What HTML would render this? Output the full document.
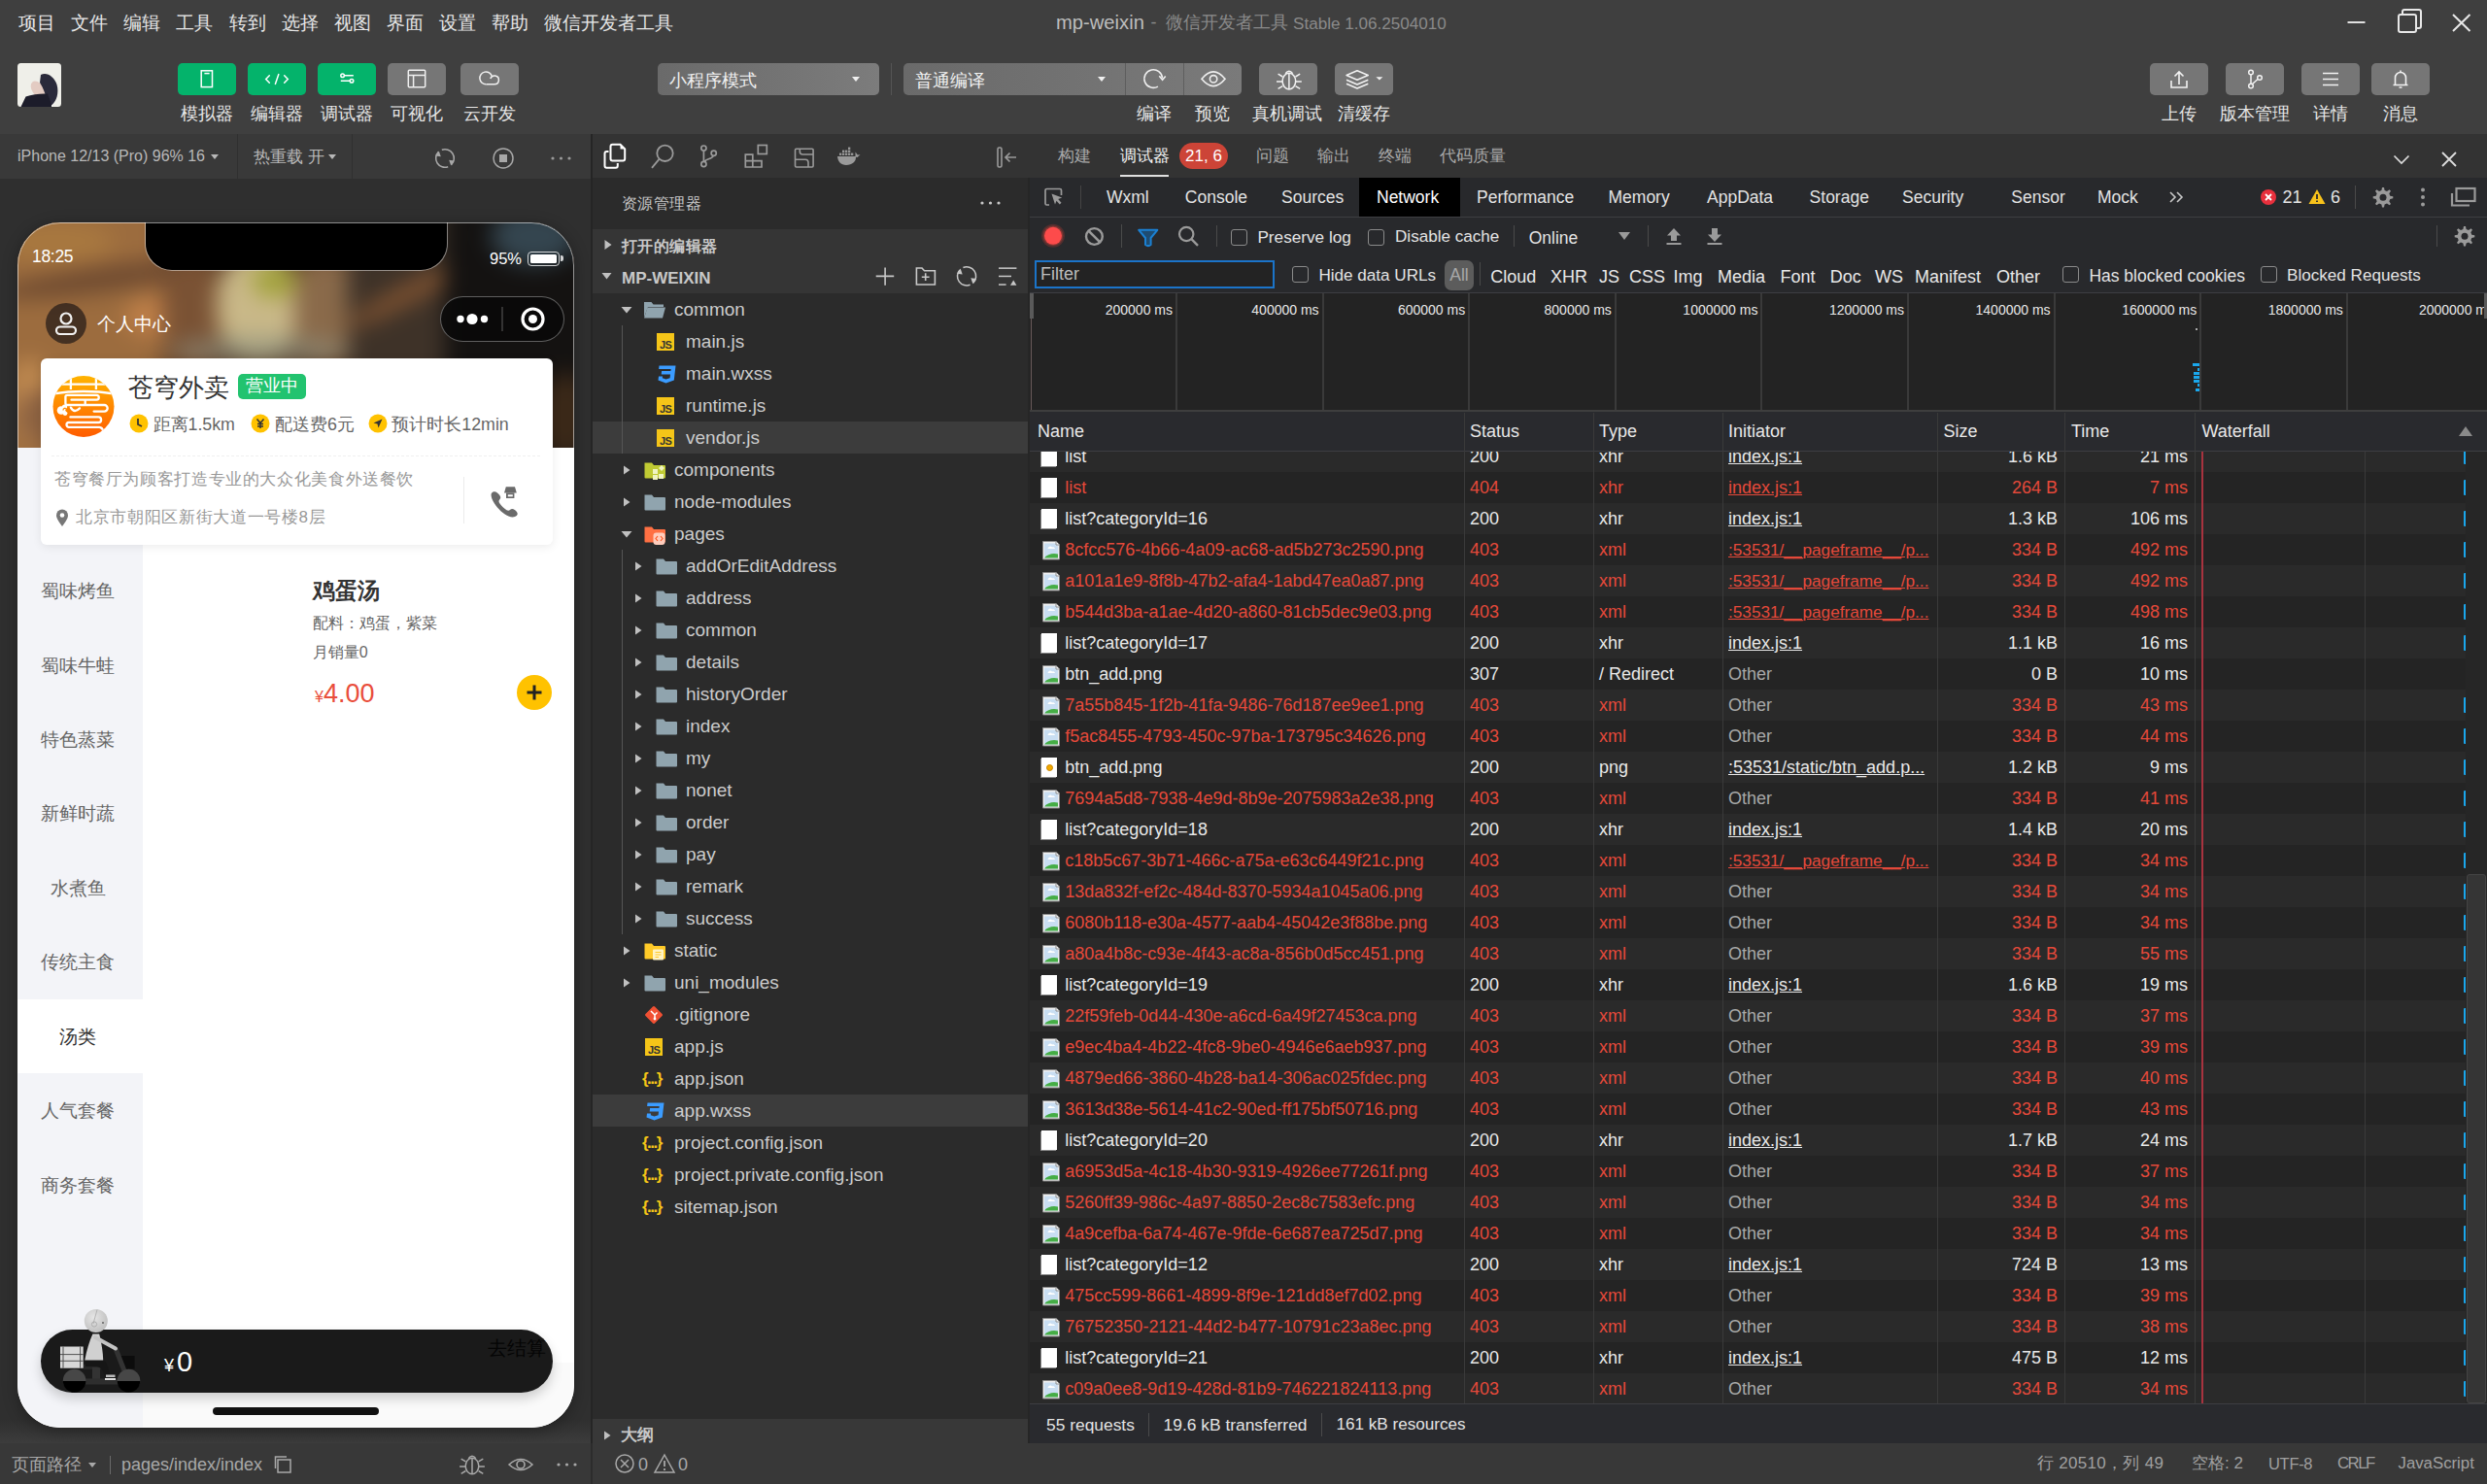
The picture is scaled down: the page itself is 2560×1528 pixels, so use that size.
<!DOCTYPE html>
<html><head><meta charset="utf-8"><title>mp-weixin</title>
<style>
html,body{margin:0;padding:0;}
body{width:2560px;height:1528px;overflow:hidden;position:relative;background:#2f2f2f;font-family:"Liberation Sans",sans-serif;}
div,svg{box-sizing:border-box;}
</style></head><body>
<div style="position:absolute;left:0px;top:0px;width:2560px;height:138px;background:#3f3f3f;"></div>
<div style="position:absolute;left:19px;top:9.5px;line-height:27px;font-size:19.3px;color:#e6e6e6;white-space:nowrap;">项目</div>
<div style="position:absolute;left:73px;top:9.5px;line-height:27px;font-size:19.3px;color:#e6e6e6;white-space:nowrap;">文件</div>
<div style="position:absolute;left:127px;top:9.5px;line-height:27px;font-size:19.3px;color:#e6e6e6;white-space:nowrap;">编辑</div>
<div style="position:absolute;left:181px;top:9.5px;line-height:27px;font-size:19.3px;color:#e6e6e6;white-space:nowrap;">工具</div>
<div style="position:absolute;left:235.5px;top:9.5px;line-height:27px;font-size:19.3px;color:#e6e6e6;white-space:nowrap;">转到</div>
<div style="position:absolute;left:289.5px;top:9.5px;line-height:27px;font-size:19.3px;color:#e6e6e6;white-space:nowrap;">选择</div>
<div style="position:absolute;left:343.5px;top:9.5px;line-height:27px;font-size:19.3px;color:#e6e6e6;white-space:nowrap;">视图</div>
<div style="position:absolute;left:397.6px;top:9.5px;line-height:27px;font-size:19.3px;color:#e6e6e6;white-space:nowrap;">界面</div>
<div style="position:absolute;left:451.6px;top:9.5px;line-height:27px;font-size:19.3px;color:#e6e6e6;white-space:nowrap;">设置</div>
<div style="position:absolute;left:505.7px;top:9.5px;line-height:27px;font-size:19.3px;color:#e6e6e6;white-space:nowrap;">帮助</div>
<div style="position:absolute;left:559.7px;top:9.5px;line-height:27px;font-size:19.3px;color:#e6e6e6;white-space:nowrap;">微信开发者工具</div>
<div style="position:absolute;left:1087px;top:9.0px;line-height:28px;font-size:20.2px;color:#bdbdbd;white-space:nowrap;">mp-weixin</div>
<div style="position:absolute;left:1184.5px;top:10.5px;line-height:25px;font-size:18px;color:#8a8a8a;white-space:nowrap;">-</div>
<div style="position:absolute;left:1199.7px;top:10.5px;line-height:25px;font-size:18px;color:#8a8a8a;white-space:nowrap;">微信开发者工具</div>
<div style="position:absolute;left:1331px;top:12.5px;line-height:24px;font-size:17.1px;color:#8a8a8a;white-space:nowrap;">Stable 1.06.2504010</div>
<svg style="position:absolute;left:2410px;top:5px;" width="150" height="36" viewBox="0 0 150 36" fill="none">
<line x1="6.5" y1="18" x2="24.5" y2="18" stroke="#e0e0e0" stroke-width="2"/>
<rect x="59" y="10" width="18" height="18" stroke="#e8e8e8" stroke-width="2" rx="2"/>
<path d="M63 9 V7 a2 2 0 0 1 2 -2 H80 a2 2 0 0 1 2 2 V22 a2 2 0 0 1 -2 2 H78" stroke="#e8e8e8" stroke-width="2"/>
<path d="M115 10 L132.5 27 M132.5 10 L115 27" stroke="#e8e8e8" stroke-width="2"/>
</svg>
<svg style="position:absolute;left:18px;top:65px" width="45" height="45" viewBox="0 0 45 45">
<defs><clipPath id="avc"><rect x="0" y="0" width="45" height="45" rx="3.5"/></clipPath><filter id="avb"><feGaussianBlur stdDeviation="0.6"/></filter></defs>
<g clip-path="url(#avc)"><rect x="0" y="0" width="45" height="45" fill="#efefe9"/>
<g filter="url(#avb)">
<ellipse cx="21" cy="27" rx="6" ry="9.5" transform="rotate(-35 21 27)" fill="#e3cbc2"/>
<path d="M24 12 C30 8.5 38 14 40.5 22 C43 31 40 39 35.5 43 L31 41 C29 33 27 26 23 20 Z" fill="#2b2a3a"/>
<path d="M3 46 L8.5 34.5 C15 32 25 31 31 31.5 L35 42 L35 46 Z" fill="#1e1d2b"/>
</g></g></svg>
<div style="position:absolute;left:183px;top:65px;width:60px;height:33px;border-radius:5px;background:#04b36b"></div>
<svg style="position:absolute;left:183px;top:65px;" width="60" height="33" viewBox="0 0 60 33" fill="none"><rect x="24.2" y="7.8" width="11.3" height="16.8" stroke="#fff" stroke-width="1.5"/><line x1="27.4" y1="10.6" x2="32.6" y2="10.6" stroke="#fff" stroke-width="1.5"/></svg>
<div style="position:absolute;left:255px;top:65px;width:60px;height:33px;border-radius:5px;background:#04b36b"></div>
<svg style="position:absolute;left:255px;top:65px;" width="60" height="33" viewBox="0 0 60 33" fill="none"><path d="M22.3 12.8 L18.7 16.5 L22.3 20.2 M37.7 12.8 L41.3 16.5 L37.7 20.2 M31.8 11.6 L28.4 21.4" stroke="#fff" stroke-width="1.5" stroke-linecap="round"/></svg>
<div style="position:absolute;left:327px;top:65px;width:60px;height:33px;border-radius:5px;background:#04b36b"></div>
<svg style="position:absolute;left:327px;top:65px;" width="60" height="33" viewBox="0 0 60 33" fill="none"><circle cx="25.6" cy="12.7" r="1.8" stroke="#fff" stroke-width="1.5"/><circle cx="35" cy="18.2" r="1.8" stroke="#fff" stroke-width="1.5"/><path d="M27.4 12.7 H36.8 M23.8 18.2 H33.2" stroke="#fff" stroke-width="1.5"/></svg>
<div style="position:absolute;left:399px;top:65px;width:60px;height:33px;border-radius:5px;background:#767676"></div>
<svg style="position:absolute;left:399px;top:65px;" width="60" height="33" viewBox="0 0 60 33" fill="none"><rect x="21.3" y="7.3" width="17.4" height="17.4" rx="1" stroke="#f0f0f0" stroke-width="1.5"/><path d="M21.3 12.4 H38.7 M26.6 12.4 V24.7" stroke="#f0f0f0" stroke-width="1.5"/></svg>
<div style="position:absolute;left:474px;top:65px;width:60px;height:33px;border-radius:5px;background:#767676"></div>
<svg style="position:absolute;left:474px;top:65px;" width="60" height="33" viewBox="0 0 60 33" fill="none"><path d="M26.5 21.8 A6.4 6.4 0 1 1 32.4 13.6" stroke="#f0f0f0" stroke-width="1.5"/><path d="M26.5 21.8 H35 A4.4 4.4 0 1 0 30.8 16" stroke="#f0f0f0" stroke-width="1.5"/></svg>
<div style="position:absolute;left:113.0px;width:200px;text-align:center;top:104.0px;line-height:26px;font-size:18.3px;color:#e6e6e6;white-space:nowrap;">模拟器</div>
<div style="position:absolute;left:185.0px;width:200px;text-align:center;top:104.0px;line-height:26px;font-size:18.3px;color:#e6e6e6;white-space:nowrap;">编辑器</div>
<div style="position:absolute;left:257.0px;width:200px;text-align:center;top:104.0px;line-height:26px;font-size:18.3px;color:#e6e6e6;white-space:nowrap;">调试器</div>
<div style="position:absolute;left:329.0px;width:200px;text-align:center;top:104.0px;line-height:26px;font-size:18.3px;color:#e6e6e6;white-space:nowrap;">可视化</div>
<div style="position:absolute;left:404.0px;width:200px;text-align:center;top:104.0px;line-height:26px;font-size:18.3px;color:#e6e6e6;white-space:nowrap;">云开发</div>
<div style="position:absolute;left:677px;top:65px;width:228px;height:33px;border-radius:5px;background:linear-gradient(90deg,#6a6a6a,#7c7c7c)"></div>
<div style="position:absolute;left:689px;top:70.5px;line-height:25px;font-size:18px;color:#f0f0f0;white-space:nowrap;">小程序模式</div>
<svg style="position:absolute;left:875px;top:76px;" width="12" height="10" viewBox="0 0 12 10" fill="none"><path d="M2 3 L10 3 L6 8 Z" fill="#f0f0f0"/></svg>
<div style="position:absolute;left:917px;top:65px;width:1px;height:33px;background:#555;"></div>
<div style="position:absolute;left:930px;top:65px;width:348px;height:33px;border-radius:5px;background:linear-gradient(90deg,#6a6a6a,#7a7a7a)"></div>
<div style="position:absolute;left:1158px;top:65px;width:1px;height:33px;background:#5e5e5e;"></div>
<div style="position:absolute;left:1218px;top:65px;width:1px;height:33px;background:#5e5e5e;"></div>
<div style="position:absolute;left:942px;top:70.5px;line-height:25px;font-size:18px;color:#f0f0f0;white-space:nowrap;">普通编译</div>
<svg style="position:absolute;left:1128px;top:76px;" width="12" height="10" viewBox="0 0 12 10" fill="none"><path d="M2 3 L10 3 L6 8 Z" fill="#f0f0f0"/></svg>
<svg style="position:absolute;left:1158px;top:65px;" width="60" height="33" viewBox="0 0 60 33" fill="none"><path d="M33.9 24.1 A9.3 9.3 0 1 1 38.5 15.5" stroke="#eee" stroke-width="1.6" fill="none"/><path d="M35.3 13.3 L38.6 17.2 L41.7 13.4" stroke="#eee" stroke-width="1.6" fill="none"/></svg>
<svg style="position:absolute;left:1218px;top:65px;" width="60" height="33" viewBox="0 0 60 33" fill="none"><path d="M19 16.3 Q31 1.5 43 16.3 Q31 31 19 16.3 Z" stroke="#eee" stroke-width="1.6"/><circle cx="31.1" cy="16.3" r="3.7" stroke="#eee" stroke-width="1.6"/></svg>
<div style="position:absolute;left:1088.0px;width:200px;text-align:center;top:104.0px;line-height:26px;font-size:18.3px;color:#e6e6e6;white-space:nowrap;">编译</div>
<div style="position:absolute;left:1148.0px;width:200px;text-align:center;top:104.0px;line-height:26px;font-size:18.3px;color:#e6e6e6;white-space:nowrap;">预览</div>
<div style="position:absolute;left:1296px;top:65px;width:60px;height:33px;border-radius:5px;background:#767676"></div>
<svg style="position:absolute;left:1296px;top:65px;" width="60" height="33" viewBox="0 0 60 33" fill="none"><g stroke="#f2f2f2" stroke-width="1.5" fill="none"><ellipse cx="30.9" cy="18.6" rx="6.8" ry="8.3"/><path d="M27.2 10.8 Q30.9 5.8 34.6 10.8"/><path d="M30.9 10.3 V26.9"/><path d="M24.3 14 L19.6 11.2 M24 19 H18 M24.3 23.6 L19.6 26.4 M37.5 14 L42.2 11.2 M37.8 19 H43.8 M37.5 23.6 L42.2 26.4"/></g></svg>
<div style="position:absolute;left:1374px;top:65px;width:60px;height:33px;border-radius:5px;background:#767676"></div>
<svg style="position:absolute;left:1374px;top:65px;" width="60" height="33" viewBox="0 0 60 33" fill="none"><g stroke="#f2f2f2" stroke-width="1.5" fill="none" stroke-linejoin="round"><path d="M12 12.5 L23 7.8 L34.3 12.5 L23 17.3 Z"/><path d="M12 17.3 L23 22 L34.3 17.3 M12 21.3 L23 26 L34.3 21.3"/></g><path d="M42.4 14.2 H49.4 L45.9 17.4 Z" fill="#f2f2f2"/></svg>
<div style="position:absolute;left:1225.0px;width:200px;text-align:center;top:104.0px;line-height:26px;font-size:18.3px;color:#e6e6e6;white-space:nowrap;">真机调试</div>
<div style="position:absolute;left:1304.0px;width:200px;text-align:center;top:104.0px;line-height:26px;font-size:18.3px;color:#e6e6e6;white-space:nowrap;">清缓存</div>
<div style="position:absolute;left:2213px;top:65px;width:60px;height:33px;border-radius:5px;background:#767676"></div>
<svg style="position:absolute;left:2213px;top:65px;" width="60" height="33" viewBox="0 0 60 33" fill="none"><path d="M22 18 V25 H38 V18" stroke="#f2f2f2" stroke-width="1.6"/><path d="M30 22 V9 M25.5 13.5 L30 9 L34.5 13.5" stroke="#f2f2f2" stroke-width="1.6"/></svg>
<div style="position:absolute;left:2291px;top:65px;width:60px;height:33px;border-radius:5px;background:#767676"></div>
<svg style="position:absolute;left:2291px;top:65px;" width="60" height="33" viewBox="0 0 60 33" fill="none"><circle cx="26" cy="9.5" r="2.3" stroke="#f2f2f2" stroke-width="1.5"/><circle cx="26" cy="23.5" r="2.3" stroke="#f2f2f2" stroke-width="1.5"/><circle cx="35" cy="15" r="2.3" stroke="#f2f2f2" stroke-width="1.5"/><path d="M26 12 V21 M33 16.5 L27.5 21.5" stroke="#f2f2f2" stroke-width="1.5"/></svg>
<div style="position:absolute;left:2369px;top:65px;width:60px;height:33px;border-radius:5px;background:#767676"></div>
<svg style="position:absolute;left:2369px;top:65px;" width="60" height="33" viewBox="0 0 60 33" fill="none"><path d="M22 10.5 H38 M22 16.5 H38 M22 22.5 H38" stroke="#f2f2f2" stroke-width="1.6"/></svg>
<div style="position:absolute;left:2441px;top:65px;width:60px;height:33px;border-radius:5px;background:#767676"></div>
<svg style="position:absolute;left:2441px;top:65px;" width="60" height="33" viewBox="0 0 60 33" fill="none"><path d="M24.5 22 V15 a5.5 5.5 0 0 1 11 0 V22 M22.5 22.5 H37.5 M30 7.5 V9.5 M28.5 25 H31.5" stroke="#f2f2f2" stroke-width="1.6"/></svg>
<div style="position:absolute;left:2143.0px;width:200px;text-align:center;top:104.0px;line-height:26px;font-size:18.3px;color:#e6e6e6;white-space:nowrap;">上传</div>
<div style="position:absolute;left:2221.0px;width:200px;text-align:center;top:104.0px;line-height:26px;font-size:18.3px;color:#e6e6e6;white-space:nowrap;">版本管理</div>
<div style="position:absolute;left:2299.0px;width:200px;text-align:center;top:104.0px;line-height:26px;font-size:18.3px;color:#e6e6e6;white-space:nowrap;">详情</div>
<div style="position:absolute;left:2371.0px;width:200px;text-align:center;top:104.0px;line-height:26px;font-size:18.3px;color:#e6e6e6;white-space:nowrap;">消息</div>
<div style="position:absolute;left:0px;top:138px;width:608px;height:46px;background:#393939;"></div>
<div style="position:absolute;left:18px;top:150.0px;line-height:22px;font-size:16px;color:#b8b8b8;white-space:nowrap;">iPhone 12/13 (Pro) 96% 16</div>
<svg style="position:absolute;left:214px;top:155px;" width="14" height="12" viewBox="0 0 14 12" fill="none"><path d="M3 4 L11 4 L7 9 Z" fill="#b8b8b8"/></svg>
<div style="position:absolute;left:244px;top:138px;width:1px;height:46px;background:#303030;"></div>
<div style="position:absolute;left:261px;top:149.5px;line-height:23px;font-size:16.5px;color:#b8b8b8;white-space:nowrap;">热重载 开</div>
<svg style="position:absolute;left:335px;top:155px;" width="14" height="12" viewBox="0 0 14 12" fill="none"><path d="M3 4 L11 4 L7 9 Z" fill="#b8b8b8"/></svg>
<div style="position:absolute;left:362px;top:138px;width:1px;height:46px;background:#303030;"></div>
<svg style="position:absolute;left:440px;top:145px;" width="40" height="36" viewBox="0 0 40 36" fill="none"><g transform="translate(-440,-145)" stroke="#a8a8a8" stroke-width="1.5" fill="none"><path d="M454.8 154.3 A9.3 9.3 0 0 1 464.6 169.6"/><path d="M461.2 171.7 A9.3 9.3 0 0 1 451.4 156.4"/></g><g transform="translate(-440,-145)" fill="#a8a8a8"><path d="M462.2 164.8 L467.8 165.6 L464.2 170.6 Z"/><path d="M453.8 161.2 L448.2 160.4 L451.8 155.4 Z"/></g></svg>
<svg style="position:absolute;left:500px;top:145px;" width="36" height="36" viewBox="0 0 36 36" fill="none"><circle cx="18" cy="17.9" r="10" stroke="#a8a8a8" stroke-width="1.5"/><rect x="14" y="14" width="8" height="8" fill="#a8a8a8"/></svg>
<svg style="position:absolute;left:566px;top:157px;" width="24" height="12" viewBox="0 0 24 12" fill="none"><circle cx="3" cy="6" r="1.6" fill="#9a9a9a"/><circle cx="11.5" cy="6" r="1.6" fill="#9a9a9a"/><circle cx="20" cy="6" r="1.6" fill="#9a9a9a"/></svg>
<div style="position:absolute;left:608px;top:138px;width:2px;height:1348px;background:#252525;"></div>
<div style="position:absolute;left:0px;top:184px;width:608px;height:1302px;background:linear-gradient(180deg,#2f2f2f 0,#2f2f2f 1278px,#3c3c3c 1302px);"></div>
<div style="position:absolute;left:18px;top:229px;width:573px;height:1241px;border-radius:44px;box-shadow:0 3px 16px rgba(0,0,0,0.32)"></div>
<div id="phone" style="position:absolute;left:18px;top:229px;width:573px;height:1241px;border-radius:44px;overflow:hidden;background:#fff">
<div style="position:absolute;left:0;top:0;width:573px;height:232px;overflow:hidden;background:#5a3d26">
<div style="position:absolute;left:-40px;top:-40px;width:660px;height:320px;filter:blur(11px)">
 <div style="position:absolute;left:0.0px;top:0.0px;width:190px;height:312px;background:#9c6c3e;border-radius:0;transform:rotate(0deg);opacity:1"></div>
 <div style="position:absolute;left:15.0px;top:85.0px;width:230px;height:26px;background:#6e4a30;border-radius:50%;transform:rotate(-8deg);opacity:1"></div>
 <div style="position:absolute;left:20.0px;top:40.0px;width:120px;height:40px;background:#a8783f;border-radius:50%;transform:rotate(0deg);opacity:1"></div>
 <div style="position:absolute;left:150.0px;top:116.0px;width:70px;height:42px;background:#c08048;border-radius:50%;transform:rotate(0deg);opacity:1"></div>
 <div style="position:absolute;left:30.0px;top:180.0px;width:44px;height:90px;background:#c08a50;border-radius:50%;transform:rotate(0deg);opacity:1"></div>
 <div style="position:absolute;left:190.0px;top:75.0px;width:60px;height:120px;background:#7a5234;border-radius:40%;transform:rotate(0deg);opacity:1"></div>
 <div style="position:absolute;left:245.0px;top:70.0px;width:86px;height:110px;background:#c9b888;border-radius:45%;transform:rotate(0deg);opacity:1"></div>
 <div style="position:absolute;left:281.0px;top:82.0px;width:48px;height:36px;background:#a3a33e;border-radius:50%;transform:rotate(0deg);opacity:1"></div>
 <div style="position:absolute;left:325.0px;top:75.0px;width:66px;height:110px;background:#8a6a4a;border-radius:40%;transform:rotate(0deg);opacity:1"></div>
 <div style="position:absolute;left:380.0px;top:0.0px;width:100px;height:312px;background:#3e3228;border-radius:0;transform:rotate(0deg);opacity:1"></div>
 <div style="position:absolute;left:370.0px;top:101.0px;width:150px;height:22px;background:#7a5030;border-radius:50%;transform:rotate(-28deg);opacity:1"></div>
 <div style="position:absolute;left:480.0px;top:0.0px;width:180px;height:312px;background:#141211;border-radius:0;transform:rotate(0deg);opacity:1"></div>
 <div style="position:absolute;left:527.0px;top:24.0px;width:90px;height:60px;background:#34454f;border-radius:50%;transform:rotate(0deg);opacity:1"></div>
 <div style="position:absolute;left:195.0px;top:157.0px;width:190px;height:30px;background:#8a9080;border-radius:50%;transform:rotate(0deg);opacity:0.6"></div>
 <div style="position:absolute;left:575.0px;top:195.0px;width:60px;height:90px;background:#3a2818;border-radius:50%;transform:rotate(0deg);opacity:1"></div>
 <div style="position:absolute;left:40.0px;top:205.0px;width:160px;height:70px;background:#8a6040;border-radius:40%;transform:rotate(0deg);opacity:1"></div>
 <div style="position:absolute;left:240.0px;top:205.0px;width:200px;height:70px;background:#6a4a30;border-radius:40%;transform:rotate(0deg);opacity:1"></div>
</div></div>
<div style="position:absolute;left:132px;top:-2px;width:310px;height:51px;background:#000;border-radius:0 0 27px 27px;box-shadow:0 0 0 1px rgba(255,255,255,0.45)"></div>
<div style="position:absolute;left:15px;top:22.5px;line-height:24px;font-size:17.5px;color:#fff;white-space:nowrap;letter-spacing:-0.3px">18:25</div>
<div style="position:absolute;left:486px;top:26.0px;line-height:23px;font-size:16.5px;color:#fff;white-space:nowrap;">95%</div>
<div style="position:absolute;left:525px;top:29.5px;width:33px;height:15px;border:1.5px solid rgba(255,255,255,0.8);border-radius:4px"></div>
<div style="position:absolute;left:528px;top:32.5px;width:27px;height:9px;background:#fff;border-radius:1.5px"></div>
<div style="position:absolute;left:559px;top:34px;width:3px;height:6px;background:rgba(255,255,255,0.8);border-radius:0 2px 2px 0"></div>
<div style="position:absolute;left:29px;top:83px;width:42px;height:42px;border-radius:50%;background:rgba(40,30,25,0.75)"></div>
<svg style="position:absolute;left:29px;top:83px;" width="42" height="42" viewBox="0 0 42 42" fill="none"><circle cx="21" cy="16" r="5.5" stroke="#f2f2f2" stroke-width="2.2"/><rect x="11" y="24.5" width="20" height="7.5" rx="3.75" stroke="#f2f2f2" stroke-width="2.2"/></svg>
<div style="position:absolute;left:82px;top:90.5px;line-height:27px;font-size:19px;color:#fff;white-space:nowrap;">个人中心</div>
<div style="position:absolute;left:435px;top:75.5px;width:128px;height:47px;border-radius:24px;border:1.5px solid rgba(255,255,255,0.35);background:rgba(8,8,8,0.85)"></div>
<svg style="position:absolute;left:435px;top:75.5px;" width="128" height="47" viewBox="0 0 128 47" fill="none"><circle cx="21" cy="23.5" r="3.7" fill="#fff"/><circle cx="33" cy="23.5" r="5.6" fill="#fff"/><circle cx="45.5" cy="23.5" r="3.7" fill="#fff"/><line x1="64" y1="11" x2="64" y2="36" stroke="rgba(255,255,255,0.35)" stroke-width="1"/><circle cx="95.5" cy="23.5" r="10.5" stroke="#fff" stroke-width="3.2"/><circle cx="95.5" cy="23.5" r="4.5" fill="#fff"/></svg>
<div style="position:absolute;left:0;top:232px;width:129px;height:1009px;background:#f3f4f8"></div>
<div style="position:absolute;left:0;top:800px;width:129px;height:76px;background:#fff"></div>
<div style="position:absolute;left:2.0px;width:120px;text-align:center;top:365.5px;line-height:27px;font-size:19px;color:#666;white-space:nowrap;">蜀味烤鱼</div>
<div style="position:absolute;left:2.0px;width:120px;text-align:center;top:443.1px;line-height:27px;font-size:19px;color:#666;white-space:nowrap;">蜀味牛蛙</div>
<div style="position:absolute;left:2.0px;width:120px;text-align:center;top:519.3px;line-height:27px;font-size:19px;color:#666;white-space:nowrap;">特色蒸菜</div>
<div style="position:absolute;left:2.0px;width:120px;text-align:center;top:594.5px;line-height:27px;font-size:19px;color:#666;white-space:nowrap;">新鲜时蔬</div>
<div style="position:absolute;left:2.0px;width:120px;text-align:center;top:671.5px;line-height:27px;font-size:19px;color:#666;white-space:nowrap;">水煮鱼</div>
<div style="position:absolute;left:2.0px;width:120px;text-align:center;top:747.5px;line-height:27px;font-size:19px;color:#666;white-space:nowrap;">传统主食</div>
<div style="position:absolute;left:2.0px;width:120px;text-align:center;top:824.5px;line-height:27px;font-size:19px;color:#333;white-space:nowrap;">汤类</div>
<div style="position:absolute;left:2.0px;width:120px;text-align:center;top:901.2px;line-height:27px;font-size:19px;color:#666;white-space:nowrap;">人气套餐</div>
<div style="position:absolute;left:2.0px;width:120px;text-align:center;top:978.3px;line-height:27px;font-size:19px;color:#666;white-space:nowrap;">商务套餐</div>
<div style="position:absolute;left:23.5px;top:140px;width:527px;height:192px;background:#fff;border-radius:6px;box-shadow:0 2px 10px rgba(0,0,0,0.08)"></div>
<svg style="position:absolute;left:35.65px;top:157.9px" width="64" height="64" viewBox="0 0 64 64">
<defs><linearGradient id="lg1" x1="0" y1="0" x2="0" y2="1"><stop offset="0" stop-color="#ffb300"/><stop offset="1" stop-color="#ff5c00"/></linearGradient>
<clipPath id="lc"><circle cx="32" cy="31.5" r="31.5"/></clipPath></defs>
<circle cx="32" cy="31.5" r="31.5" fill="url(#lg1)"/>
<g clip-path="url(#lc)" stroke="#fff" stroke-width="2.3" fill="none" stroke-linecap="round">
<path d="M18.9 -2 V14 M44.9 -2 V14" stroke-linecap="butt"/>
<path d="M-2 8.7 H66" stroke-linecap="butt"/>
<path d="M-2 18.8 Q32 13.2 66 18.8" stroke-linecap="butt"/>
<path d="M19.5 24.7 H45.3 a2.45 2.45 0 0 0 0 -4.9 H15.2 a1.8 1.8 0 0 0 -1.8 1.8 V28.2 a1.8 1.8 0 0 0 1.8 1.8 H53.4 a3.3 3.3 0 0 1 0 6.6 H42.6"/>
<path d="M33.7 25.5 V29.5"/>
<path d="M18.9 32.6 Q22.5 39 28 33.4"/>
<path d="M18.4 42.4 H47.3 a2.8 2.8 0 0 1 0 5.6 H16.9 a2.4 2.4 0 0 0 0 4.8 H48.3 Q51.2 53 52.6 57" />
</g>
<circle cx="9" cy="35.5" r="4.3" fill="#fff"/><circle cx="12.5" cy="32" r="2.6" fill="#fff"/><circle cx="13" cy="38.5" r="2.4" fill="#fff"/>
<path d="M11 35.5 a2 2 0 1 1 3 1.5" stroke="#ff8a00" stroke-width="1.2" fill="none"/>
</svg>
<div style="position:absolute;left:114px;top:152.0px;line-height:36px;font-size:26px;color:#333;white-space:nowrap;">苍穹外卖</div>
<div style="position:absolute;left:227px;top:155.6px;width:69.5px;height:26.2px;background:#22c36f;border-radius:5px"></div>
<div style="position:absolute;left:221.7px;width:80px;text-align:center;top:156.2px;line-height:25px;font-size:17.7px;color:#fff;white-space:nowrap;">营业中</div>
<svg style="position:absolute;left:114.80000000000001px;top:197.39999999999998px;" width="20" height="20" viewBox="0 0 20 20" fill="none"><circle cx="10" cy="10" r="9.5" fill="#ffc200"/><path d="M9 5 V11 L13 13" stroke="#333" stroke-width="1.8" fill="none"/></svg>
<svg style="position:absolute;left:239.89999999999998px;top:197.39999999999998px;" width="20" height="20" viewBox="0 0 20 20" fill="none"><circle cx="10" cy="10" r="9.5" fill="#ffc200"/><path d="M6.5 5.5 L10 9.5 L13.5 5.5 M10 9.5 V15 M7 10.5 H13 M7 13 H13" stroke="#333" stroke-width="1.5" fill="none"/></svg>
<svg style="position:absolute;left:361px;top:197.39999999999998px;" width="20" height="20" viewBox="0 0 20 20" fill="none"><circle cx="10" cy="10" r="9.5" fill="#ffc200"/><path d="M14.5 5.5 L5.5 9.5 L9.5 10.5 L10.5 14.5 Z" fill="#333"/></svg>
<div style="position:absolute;left:139.5px;top:195.7px;line-height:25px;font-size:17.8px;color:#666;white-space:nowrap;">距离1.5km</div>
<div style="position:absolute;left:265px;top:195.7px;line-height:25px;font-size:17.8px;color:#666;white-space:nowrap;">配送费6元</div>
<div style="position:absolute;left:385.3px;top:195.7px;line-height:25px;font-size:17.8px;color:#666;white-space:nowrap;">预计时长12min</div>
<div style="position:absolute;left:35px;top:239.5px;width:503px;height:0;border-top:1px dashed #efefef"></div>
<div style="position:absolute;left:38px;top:253.0px;line-height:24px;font-size:17px;color:#999;white-space:nowrap;letter-spacing:0.62px">苍穹餐厅为顾客打造专业的大众化美食外送餐饮</div>
<svg style="position:absolute;left:39px;top:295px;" width="14" height="19" viewBox="0 0 14 19" fill="none"><path d="M7 18 C3 12.5 1 9.5 1 6.5 a6 6 0 0 1 12 0 C13 9.5 11 12.5 7 18 Z" fill="#777"/><circle cx="7" cy="6.5" r="2.3" fill="#fff"/></svg>
<div style="position:absolute;left:60px;top:292.0px;line-height:24px;font-size:17px;color:#999;white-space:nowrap;letter-spacing:0.66px">北京市朝阳区新街大道一号楼8层</div>
<div style="position:absolute;left:459px;top:262px;width:1px;height:48px;background:#ebebeb"></div>
<svg style="position:absolute;left:482px;top:266px;" width="40" height="45" viewBox="0 0 40 45" fill="none"><g transform="translate(-500,-495)" fill="#6a6a6a"><path d="M507.5 506.5 C510 505.5 512 507 514 509.5 C515.5 511.5 515.8 512.8 514.2 514.6 C513.2 515.8 513.3 516.8 514.5 518.6 C516.5 521.5 518.8 523.7 521.5 525.2 C523 526 524.2 525.8 525.2 524.8 C526.5 523.5 528 523.6 530.2 525.2 C532.8 527.2 533.5 529.5 531.8 531 C530 532.6 527 533 523.5 531.5 C518 529 512.5 524 509 518.5 C506.3 514.2 505 510.5 505.8 508.2 C506.1 507.4 506.7 506.8 507.5 506.5 Z"/><path d="M520.8 501.2 H530 L531.8 507.4 H519 Z"/><rect x="521" y="507.4" width="8.4" height="5.6"/><rect x="522.8" y="509.3" width="5" height="2" fill="#fff"/></g></svg>
<div style="position:absolute;left:303.7px;top:362.5px;line-height:32px;font-size:23px;color:#333;white-space:nowrap;font-weight:bold">鸡蛋汤</div>
<div style="position:absolute;left:303.7px;top:401.5px;line-height:22px;font-size:16px;color:#666;white-space:nowrap;">配料：鸡蛋，紫菜</div>
<div style="position:absolute;left:303.7px;top:432.0px;line-height:22px;font-size:16px;color:#666;white-space:nowrap;">月销量0</div>
<div style="position:absolute;left:306px;top:465.6px;line-height:38px;font-size:27px;color:#e94e3c;white-space:nowrap;"><span style="font-size:16px">¥</span>4.00</div>
<div style="position:absolute;left:514.3px;top:466.29999999999995px;width:36px;height:36px;border-radius:50%;background:#ffc200"></div>
<svg style="position:absolute;left:514.3px;top:466.29999999999995px;" width="36" height="36" viewBox="0 0 36 36" fill="none"><path d="M18 10.5 V25.5 M10.5 18 H25.5" stroke="#222" stroke-width="3"/></svg>
<div style="position:absolute;left:129px;top:1174px;width:444px;height:67px;background:#fafafa"></div>
<div style="position:absolute;left:23.8px;top:1139.6px;width:527.2px;height:65px;border-radius:33px;background:#1a1a1a;box-shadow:0 6px 12px rgba(0,0,0,0.18)"></div>
<div style="position:absolute;left:483.6px;top:1145.0px;line-height:28px;font-size:20px;color:#050505;white-space:nowrap;">去结算</div>
<div style="position:absolute;left:151px;top:1152.8px;line-height:41px;font-size:29px;color:#fff;white-space:nowrap;"><span style="font-size:18px;margin-right:3px">¥</span>0</div>
<svg style="position:absolute;left:42px;top:1115px" width="104" height="104" viewBox="60 1344 104 104">
<defs><radialGradient id="hg" cx="0.4" cy="0.35" r="0.7"><stop offset="0" stop-color="#e6e6e6"/><stop offset="1" stop-color="#bdbdbd"/></radialGradient></defs>
<rect x="62" y="1386.5" width="23.7" height="22.2" fill="#d8d8d8"/>
<path d="M65 1386.5 V1408.7 M82.6 1386.5 V1408.7 M62 1394.6 H85.7 M62 1401.3 H85.7" stroke="#444" stroke-width="0.9"/>
<rect x="124.4" y="1396" width="14.2" height="13.4" fill="#0c0c0c"/>
<path d="M86 1405 H108 V1410 H86 Z" fill="#262626"/>
<rect x="95" y="1408" width="8" height="14" fill="#333"/>
<path d="M119 1388.5 L127.8 1411" stroke="#333" stroke-width="5"/>
<path d="M86 1419.5 H122 L124 1425.5 H84 Z" fill="#2e2e2e"/>
<path d="M87.5 1400.5 L106 1400.5 C110 1402 112 1408 113 1417 L108 1417.5 C106 1411 104 1408 100 1407 L88 1407 Z" fill="#161616"/>
<rect x="109" y="1415.5" width="9.5" height="2.5" fill="#bbb"/><rect x="108" y="1419" width="11" height="2" fill="#ddd"/>
<path d="M95.4 1373.5 L102.2 1373.5 C104.5 1383 106 1392 106.2 1400.6 L87.3 1400.6 C89 1391 92 1381 95.4 1373.5 Z" fill="#d0d0d0"/>
<path d="M98 1377 L119 1388.5" stroke="#c4c4c4" stroke-width="4" stroke-linecap="round"/>
<circle cx="98.8" cy="1360" r="12" fill="url(#hg)"/>
<path d="M100 1348.5 L96 1363" stroke="#aaa" stroke-width="0.8"/>
<circle cx="97" cy="1363.5" r="2.6" fill="none" stroke="#aaa" stroke-width="0.9"/>
<circle cx="106" cy="1362" r="0.9" fill="#555"/>
<circle cx="76.6" cy="1421.5" r="11.8" fill="#474747"/><path d="M64.8 1422 a11.8 11.8 0 0 0 23.6 0 Z" fill="#000"/>
<circle cx="132.5" cy="1421.5" r="11.8" fill="#474747"/><path d="M120.7 1422 a11.8 11.8 0 0 0 23.6 0 Z" fill="#000"/>
</svg>
<div style="position:absolute;left:201px;top:1220px;width:170.5px;height:8px;border-radius:4px;background:#111"></div>
<div style="position:absolute;left:0;top:0;width:573px;height:1241px;border-radius:44px;border:1px solid rgba(255,255,255,0.55)"></div>
</div>
<div style="position:absolute;left:610px;top:138px;width:450px;height:45px;background:#333333;"></div>
<div style="position:absolute;left:610px;top:183px;width:450px;height:1303px;background:#2b2b2b;"></div>
<svg style="position:absolute;left:600px;top:140px;" width="300" height="40" viewBox="0 0 300 40" fill="none"><g transform="translate(-600,-140)"><path d="M626.5 156 H624.5 a2 2 0 0 0 -2 2 V170.8 a2 2 0 0 0 2 2 H633.8 a2 2 0 0 0 2 -2 V168" stroke="#fff" stroke-width="2" fill="none"/><path d="M630.5 148.7 H638.5 L643.2 153.4 V163.5 a2 2 0 0 1 -2 2 H630.5 a2 2 0 0 1 -2 -2 V150.7 a2 2 0 0 1 2 -2 Z" stroke="#fff" stroke-width="2" fill="none"/><path d="M638.5 148.7 L643.2 153.4 H638.5 Z" fill="#fff"/><circle cx="684.5" cy="157.8" r="8.2" stroke="#9a9a9a" stroke-width="1.8" fill="none"/><path d="M678.5 163.8 L671 172.8" stroke="#9a9a9a" stroke-width="1.8"/><circle cx="724.4" cy="152.6" r="2.6" stroke="#9a9a9a" stroke-width="1.7" fill="none"/><circle cx="724.4" cy="169" r="2.6" stroke="#9a9a9a" stroke-width="1.7" fill="none"/><circle cx="734.7" cy="157.8" r="2.6" stroke="#9a9a9a" stroke-width="1.7" fill="none"/><path d="M724.4 155.2 V166.4 M734.2 160.4 C733 164 726 163.5 725.5 166.5" stroke="#9a9a9a" stroke-width="1.7" fill="none"/><path d="M767.3 159.2 H774.8 V172 H767.3 Z M767.3 165.6 H784 V172 H774.8" stroke="#9a9a9a" stroke-width="1.7" fill="none"/><rect x="780.3" y="149.5" width="9" height="9" stroke="#9a9a9a" stroke-width="1.7" fill="none"/><rect x="818.5" y="153.2" width="18.6" height="18.8" rx="1.2" stroke="#9a9a9a" stroke-width="1.6" fill="none"/><path d="M823.3 153.2 V156 a3 3 0 0 0 3 3 H837.1 M818.5 164.3 H829 a3 3 0 0 1 3 3 V172" stroke="#9a9a9a" stroke-width="1.6" fill="none"/><path d="M862 161 H881 C881.5 166.5 877 170 871 170 C865.5 170 862.3 166 862 161 Z" fill="#9a9a9a"/><path d="M880.5 161.5 L880.5 156.5 L882.8 159.5 L885.5 159.2 L882.5 162 Z" fill="#9a9a9a"/><rect x="864" y="157.6" width="2.3" height="2.3" fill="#9a9a9a"/><rect x="867" y="157.6" width="2.3" height="2.3" fill="#9a9a9a"/><rect x="870" y="157.6" width="2.3" height="2.3" fill="#9a9a9a"/><rect x="873" y="157.6" width="2.3" height="2.3" fill="#9a9a9a"/><rect x="876" y="157.6" width="2.3" height="2.3" fill="#9a9a9a"/><rect x="867" y="154.6" width="2.3" height="2.3" fill="#9a9a9a"/><rect x="870" y="154.6" width="2.3" height="2.3" fill="#9a9a9a"/><rect x="873" y="154.6" width="2.3" height="2.3" fill="#9a9a9a"/><rect x="873" y="151.6" width="2.3" height="2.3" fill="#9a9a9a"/></g></svg>
<svg style="position:absolute;left:1024px;top:150px;" width="26" height="24" viewBox="0 0 26 24" fill="none"><rect x="3" y="2" width="4" height="20" rx="1.5" stroke="#9a9a9a" stroke-width="1.6"/><path d="M22 12 H11 M15.5 7.5 L11 12 L15.5 16.5" stroke="#9a9a9a" stroke-width="1.7"/></svg>
<div style="position:absolute;left:640px;top:199.0px;line-height:22px;font-size:16px;color:#c8c8c8;white-space:nowrap;letter-spacing:0.4px">资源管理器</div>
<svg style="position:absolute;left:1008px;top:203px;" width="24" height="12" viewBox="0 0 24 12" fill="none"><circle cx="3" cy="6" r="1.6" fill="#c8c8c8"/><circle cx="11.5" cy="6" r="1.6" fill="#c8c8c8"/><circle cx="20" cy="6" r="1.6" fill="#c8c8c8"/></svg>
<div style="position:absolute;left:610px;top:236px;width:448px;height:66px;background:#353535;"></div>
<svg style="position:absolute;left:619px;top:244px;" width="14" height="16" viewBox="0 0 14 16" fill="none"><path d="M3.5 3 L10.5 8 L3.5 13 Z" fill="#c0c0c0"/></svg>
<div style="position:absolute;left:640px;top:242.5px;line-height:22px;font-size:16px;color:#c8c8c8;white-space:nowrap;font-weight:bold;letter-spacing:0.4px">打开的编辑器</div>
<svg style="position:absolute;left:617px;top:277px;" width="16" height="14" viewBox="0 0 16 14" fill="none"><path d="M2.5 4 L12.5 4 L7.5 10.5 Z" fill="#c0c0c0"/></svg>
<div style="position:absolute;left:640px;top:274.8px;line-height:24px;font-size:17px;color:#c8c8c8;white-space:nowrap;font-weight:bold">MP-WEIXIN</div>
<svg style="position:absolute;left:890px;top:265px;" width="170" height="36" viewBox="0 0 170 36" fill="none"><g transform="translate(-890,-265)" stroke="#c8c8c8" fill="none"><path d="M911.1 275.4 V293.8 M901.7 284.4 H920.2" stroke-width="1.6"/><path d="M943.4 293 V276 H949 L951.5 278.8 H962.4 V293 Z" stroke-width="1.6"/><path d="M952.7 281.3 V289.1 M948.8 285.2 H956.6" stroke-width="1.6"/><path d="M991.4 275.5 A9.6 9.6 0 0 1 1001.8 291.2" stroke-width="1.5"/><path d="M998.6 293.3 A9.6 9.6 0 0 1 987.9 278" stroke-width="1.5"/></g><g transform="translate(-890,-265)" fill="#c8c8c8"><path d="M999.3 286.3 L1005.1 287.1 L1001.4 292.2 Z"/><path d="M990.7 282.5 L984.9 281.7 L988.6 276.6 Z"/><rect x="1028" y="275.4" width="18.4" height="1.5"/><rect x="1028" y="283.7" width="13" height="1.5"/><rect x="1028" y="292.3" width="7.6" height="1.5"/><path d="M1040 293.8 L1043.2 288.6 L1046.4 293.8 Z"/></g></svg>
<div style="position:absolute;left:610px;top:434px;width:448px;height:33px;background:#3c3c3c;"></div>
<div style="position:absolute;left:610px;top:1127px;width:448px;height:33px;background:#3c3c3c;"></div>
<div style="position:absolute;left:640px;top:335px;width:1px;height:132px;background:#555;"></div>
<div style="position:absolute;left:640px;top:566px;width:1px;height:396px;background:#555;"></div>
<svg style="position:absolute;left:638px;top:312.5px;" width="14" height="12" viewBox="0 0 14 12" fill="none"><path d="M1.5 3 L12.5 3 L7 9.5 Z" fill="#c0c0c0"/></svg>
<svg style="position:absolute;left:662px;top:307.5px;" width="24" height="22" viewBox="0 0 24 22" fill="none"><path d="M1 3 H8.5 L10.5 5.5 H21 V8 H5 L1 19 Z" fill="#90a4ae"/><path d="M4.5 8.5 H23 L20 19.5 H1 Z" fill="#90a4ae"/></svg>
<div style="position:absolute;left:694px;top:305.0px;line-height:27px;font-size:19px;color:#cccccc;white-space:nowrap;">common</div>
<div style="position:absolute;left:676px;top:342.5px;width:18px;height:18px;background:#f5c518"></div>
<div style="position:absolute;left:679px;top:348.5px;line-height:12px;font-size:11px;font-weight:bold;color:#333;letter-spacing:-0.5px">JS</div>
<div style="position:absolute;left:706px;top:338.0px;line-height:27px;font-size:19px;color:#cccccc;white-space:nowrap;">main.js</div>
<svg style="position:absolute;left:675px;top:373.5px;" width="22" height="22" viewBox="0 0 22 22" fill="none"><path d="M3.5 2.5 H20.5 L18.8 17.5 L10.5 20.5 L2.5 17.5 L3 13.5 H7 L6.8 15.2 L10.5 16.5 L14.6 15.2 L15 11.5 H5.7 L6.1 8 H15.4 L15.7 6 H3.1 Z" fill="#3b9cff"/></svg>
<div style="position:absolute;left:706px;top:371.0px;line-height:27px;font-size:19px;color:#cccccc;white-space:nowrap;">main.wxss</div>
<div style="position:absolute;left:676px;top:408.5px;width:18px;height:18px;background:#f5c518"></div>
<div style="position:absolute;left:679px;top:414.5px;line-height:12px;font-size:11px;font-weight:bold;color:#333;letter-spacing:-0.5px">JS</div>
<div style="position:absolute;left:706px;top:404.0px;line-height:27px;font-size:19px;color:#cccccc;white-space:nowrap;">runtime.js</div>
<div style="position:absolute;left:676px;top:441.5px;width:18px;height:18px;background:#f5c518"></div>
<div style="position:absolute;left:679px;top:447.5px;line-height:12px;font-size:11px;font-weight:bold;color:#333;letter-spacing:-0.5px">JS</div>
<div style="position:absolute;left:706px;top:437.0px;line-height:27px;font-size:19px;color:#cccccc;white-space:nowrap;">vendor.js</div>
<svg style="position:absolute;left:639px;top:476.5px;" width="12" height="14" viewBox="0 0 12 14" fill="none"><path d="M3 2.5 L9.5 7 L3 11.5 Z" fill="#c0c0c0"/></svg>
<svg style="position:absolute;left:662px;top:472.5px;" width="24" height="22" viewBox="0 0 24 22" fill="none"><path d="M1.5 3.5 H9 L11 6 H22 a1 1 0 0 1 1 1 V18.5 a1 1 0 0 1 -1 1 H2.5 a1 1 0 0 1 -1 -1 Z" fill="#c0ca33"/><rect x="10" y="10" width="5" height="5" fill="#f0f4c3"/><rect x="16" y="15" width="5" height="5" fill="#f0f4c3"/><rect x="10" y="16" width="5" height="5" fill="#f0f4c3"/><path d="M16 9 L19 12 L22 9 L19 6 Z" fill="#f0f4c3"/></svg>
<div style="position:absolute;left:694px;top:470.0px;line-height:27px;font-size:19px;color:#cccccc;white-space:nowrap;">components</div>
<svg style="position:absolute;left:639px;top:509.5px;" width="12" height="14" viewBox="0 0 12 14" fill="none"><path d="M3 2.5 L9.5 7 L3 11.5 Z" fill="#c0c0c0"/></svg>
<svg style="position:absolute;left:662px;top:505.5px;" width="24" height="22" viewBox="0 0 24 22" fill="none"><path d="M1.5 3.5 H9 L11 6 H22 a1 1 0 0 1 1 1 V18.5 a1 1 0 0 1 -1 1 H2.5 a1 1 0 0 1 -1 -1 Z" fill="#90a4ae"/></svg>
<div style="position:absolute;left:694px;top:503.0px;line-height:27px;font-size:19px;color:#cccccc;white-space:nowrap;">node-modules</div>
<svg style="position:absolute;left:638px;top:543.5px;" width="14" height="12" viewBox="0 0 14 12" fill="none"><path d="M1.5 3 L12.5 3 L7 9.5 Z" fill="#c0c0c0"/></svg>
<svg style="position:absolute;left:662px;top:538.5px;" width="24" height="22" viewBox="0 0 24 22" fill="none"><path d="M1.5 3.5 H9 L11 6 H22 a1 1 0 0 1 1 1 V18.5 a1 1 0 0 1 -1 1 H2.5 a1 1 0 0 1 -1 -1 Z" fill="#ff7043"/><rect x="10.5" y="9.5" width="12" height="12.5" rx="3" fill="#ffccbc"/><path d="M15 13 L13 15.5 L15 18 M18 13 L20 15.5 L18 18" stroke="#ff5722" stroke-width="1.2" fill="none"/></svg>
<div style="position:absolute;left:694px;top:536.0px;line-height:27px;font-size:19px;color:#cccccc;white-space:nowrap;">pages</div>
<svg style="position:absolute;left:651px;top:575.5px;" width="12" height="14" viewBox="0 0 12 14" fill="none"><path d="M3 2.5 L9.5 7 L3 11.5 Z" fill="#c0c0c0"/></svg>
<svg style="position:absolute;left:674px;top:571.5px;" width="24" height="22" viewBox="0 0 24 22" fill="none"><path d="M1.5 3.5 H9 L11 6 H22 a1 1 0 0 1 1 1 V18.5 a1 1 0 0 1 -1 1 H2.5 a1 1 0 0 1 -1 -1 Z" fill="#90a4ae"/></svg>
<div style="position:absolute;left:706px;top:569.0px;line-height:27px;font-size:19px;color:#cccccc;white-space:nowrap;">addOrEditAddress</div>
<svg style="position:absolute;left:651px;top:608.5px;" width="12" height="14" viewBox="0 0 12 14" fill="none"><path d="M3 2.5 L9.5 7 L3 11.5 Z" fill="#c0c0c0"/></svg>
<svg style="position:absolute;left:674px;top:604.5px;" width="24" height="22" viewBox="0 0 24 22" fill="none"><path d="M1.5 3.5 H9 L11 6 H22 a1 1 0 0 1 1 1 V18.5 a1 1 0 0 1 -1 1 H2.5 a1 1 0 0 1 -1 -1 Z" fill="#90a4ae"/></svg>
<div style="position:absolute;left:706px;top:602.0px;line-height:27px;font-size:19px;color:#cccccc;white-space:nowrap;">address</div>
<svg style="position:absolute;left:651px;top:641.5px;" width="12" height="14" viewBox="0 0 12 14" fill="none"><path d="M3 2.5 L9.5 7 L3 11.5 Z" fill="#c0c0c0"/></svg>
<svg style="position:absolute;left:674px;top:637.5px;" width="24" height="22" viewBox="0 0 24 22" fill="none"><path d="M1.5 3.5 H9 L11 6 H22 a1 1 0 0 1 1 1 V18.5 a1 1 0 0 1 -1 1 H2.5 a1 1 0 0 1 -1 -1 Z" fill="#90a4ae"/></svg>
<div style="position:absolute;left:706px;top:635.0px;line-height:27px;font-size:19px;color:#cccccc;white-space:nowrap;">common</div>
<svg style="position:absolute;left:651px;top:674.5px;" width="12" height="14" viewBox="0 0 12 14" fill="none"><path d="M3 2.5 L9.5 7 L3 11.5 Z" fill="#c0c0c0"/></svg>
<svg style="position:absolute;left:674px;top:670.5px;" width="24" height="22" viewBox="0 0 24 22" fill="none"><path d="M1.5 3.5 H9 L11 6 H22 a1 1 0 0 1 1 1 V18.5 a1 1 0 0 1 -1 1 H2.5 a1 1 0 0 1 -1 -1 Z" fill="#90a4ae"/></svg>
<div style="position:absolute;left:706px;top:668.0px;line-height:27px;font-size:19px;color:#cccccc;white-space:nowrap;">details</div>
<svg style="position:absolute;left:651px;top:707.5px;" width="12" height="14" viewBox="0 0 12 14" fill="none"><path d="M3 2.5 L9.5 7 L3 11.5 Z" fill="#c0c0c0"/></svg>
<svg style="position:absolute;left:674px;top:703.5px;" width="24" height="22" viewBox="0 0 24 22" fill="none"><path d="M1.5 3.5 H9 L11 6 H22 a1 1 0 0 1 1 1 V18.5 a1 1 0 0 1 -1 1 H2.5 a1 1 0 0 1 -1 -1 Z" fill="#90a4ae"/></svg>
<div style="position:absolute;left:706px;top:701.0px;line-height:27px;font-size:19px;color:#cccccc;white-space:nowrap;">historyOrder</div>
<svg style="position:absolute;left:651px;top:740.5px;" width="12" height="14" viewBox="0 0 12 14" fill="none"><path d="M3 2.5 L9.5 7 L3 11.5 Z" fill="#c0c0c0"/></svg>
<svg style="position:absolute;left:674px;top:736.5px;" width="24" height="22" viewBox="0 0 24 22" fill="none"><path d="M1.5 3.5 H9 L11 6 H22 a1 1 0 0 1 1 1 V18.5 a1 1 0 0 1 -1 1 H2.5 a1 1 0 0 1 -1 -1 Z" fill="#90a4ae"/></svg>
<div style="position:absolute;left:706px;top:734.0px;line-height:27px;font-size:19px;color:#cccccc;white-space:nowrap;">index</div>
<svg style="position:absolute;left:651px;top:773.5px;" width="12" height="14" viewBox="0 0 12 14" fill="none"><path d="M3 2.5 L9.5 7 L3 11.5 Z" fill="#c0c0c0"/></svg>
<svg style="position:absolute;left:674px;top:769.5px;" width="24" height="22" viewBox="0 0 24 22" fill="none"><path d="M1.5 3.5 H9 L11 6 H22 a1 1 0 0 1 1 1 V18.5 a1 1 0 0 1 -1 1 H2.5 a1 1 0 0 1 -1 -1 Z" fill="#90a4ae"/></svg>
<div style="position:absolute;left:706px;top:767.0px;line-height:27px;font-size:19px;color:#cccccc;white-space:nowrap;">my</div>
<svg style="position:absolute;left:651px;top:806.5px;" width="12" height="14" viewBox="0 0 12 14" fill="none"><path d="M3 2.5 L9.5 7 L3 11.5 Z" fill="#c0c0c0"/></svg>
<svg style="position:absolute;left:674px;top:802.5px;" width="24" height="22" viewBox="0 0 24 22" fill="none"><path d="M1.5 3.5 H9 L11 6 H22 a1 1 0 0 1 1 1 V18.5 a1 1 0 0 1 -1 1 H2.5 a1 1 0 0 1 -1 -1 Z" fill="#90a4ae"/></svg>
<div style="position:absolute;left:706px;top:800.0px;line-height:27px;font-size:19px;color:#cccccc;white-space:nowrap;">nonet</div>
<svg style="position:absolute;left:651px;top:839.5px;" width="12" height="14" viewBox="0 0 12 14" fill="none"><path d="M3 2.5 L9.5 7 L3 11.5 Z" fill="#c0c0c0"/></svg>
<svg style="position:absolute;left:674px;top:835.5px;" width="24" height="22" viewBox="0 0 24 22" fill="none"><path d="M1.5 3.5 H9 L11 6 H22 a1 1 0 0 1 1 1 V18.5 a1 1 0 0 1 -1 1 H2.5 a1 1 0 0 1 -1 -1 Z" fill="#90a4ae"/></svg>
<div style="position:absolute;left:706px;top:833.0px;line-height:27px;font-size:19px;color:#cccccc;white-space:nowrap;">order</div>
<svg style="position:absolute;left:651px;top:872.5px;" width="12" height="14" viewBox="0 0 12 14" fill="none"><path d="M3 2.5 L9.5 7 L3 11.5 Z" fill="#c0c0c0"/></svg>
<svg style="position:absolute;left:674px;top:868.5px;" width="24" height="22" viewBox="0 0 24 22" fill="none"><path d="M1.5 3.5 H9 L11 6 H22 a1 1 0 0 1 1 1 V18.5 a1 1 0 0 1 -1 1 H2.5 a1 1 0 0 1 -1 -1 Z" fill="#90a4ae"/></svg>
<div style="position:absolute;left:706px;top:866.0px;line-height:27px;font-size:19px;color:#cccccc;white-space:nowrap;">pay</div>
<svg style="position:absolute;left:651px;top:905.5px;" width="12" height="14" viewBox="0 0 12 14" fill="none"><path d="M3 2.5 L9.5 7 L3 11.5 Z" fill="#c0c0c0"/></svg>
<svg style="position:absolute;left:674px;top:901.5px;" width="24" height="22" viewBox="0 0 24 22" fill="none"><path d="M1.5 3.5 H9 L11 6 H22 a1 1 0 0 1 1 1 V18.5 a1 1 0 0 1 -1 1 H2.5 a1 1 0 0 1 -1 -1 Z" fill="#90a4ae"/></svg>
<div style="position:absolute;left:706px;top:899.0px;line-height:27px;font-size:19px;color:#cccccc;white-space:nowrap;">remark</div>
<svg style="position:absolute;left:651px;top:938.5px;" width="12" height="14" viewBox="0 0 12 14" fill="none"><path d="M3 2.5 L9.5 7 L3 11.5 Z" fill="#c0c0c0"/></svg>
<svg style="position:absolute;left:674px;top:934.5px;" width="24" height="22" viewBox="0 0 24 22" fill="none"><path d="M1.5 3.5 H9 L11 6 H22 a1 1 0 0 1 1 1 V18.5 a1 1 0 0 1 -1 1 H2.5 a1 1 0 0 1 -1 -1 Z" fill="#90a4ae"/></svg>
<div style="position:absolute;left:706px;top:932.0px;line-height:27px;font-size:19px;color:#cccccc;white-space:nowrap;">success</div>
<svg style="position:absolute;left:639px;top:971.5px;" width="12" height="14" viewBox="0 0 12 14" fill="none"><path d="M3 2.5 L9.5 7 L3 11.5 Z" fill="#c0c0c0"/></svg>
<svg style="position:absolute;left:662px;top:967.5px;" width="24" height="22" viewBox="0 0 24 22" fill="none"><path d="M1.5 3.5 H9 L11 6 H22 a1 1 0 0 1 1 1 V18.5 a1 1 0 0 1 -1 1 H2.5 a1 1 0 0 1 -1 -1 Z" fill="#ffca28"/><rect x="10" y="9.5" width="11" height="11" rx="1" fill="#fff3c4"/><path d="M12.5 12.5 H18.5 M12.5 15 H18.5 M12.5 17.5 H16" stroke="#ffca28" stroke-width="1.2"/></svg>
<div style="position:absolute;left:694px;top:965.0px;line-height:27px;font-size:19px;color:#cccccc;white-space:nowrap;">static</div>
<svg style="position:absolute;left:639px;top:1004.5px;" width="12" height="14" viewBox="0 0 12 14" fill="none"><path d="M3 2.5 L9.5 7 L3 11.5 Z" fill="#c0c0c0"/></svg>
<svg style="position:absolute;left:662px;top:1000.5px;" width="24" height="22" viewBox="0 0 24 22" fill="none"><path d="M1.5 3.5 H9 L11 6 H22 a1 1 0 0 1 1 1 V18.5 a1 1 0 0 1 -1 1 H2.5 a1 1 0 0 1 -1 -1 Z" fill="#90a4ae"/></svg>
<div style="position:absolute;left:694px;top:998.0px;line-height:27px;font-size:19px;color:#cccccc;white-space:nowrap;">uni_modules</div>
<svg style="position:absolute;left:663px;top:1034.5px;" width="20" height="20" viewBox="0 0 20 20" fill="none"><rect x="3.2" y="3.2" width="13.6" height="13.6" transform="rotate(45 10 10)" rx="1.5" fill="#f05033"/><path d="M7 6 L11 10 V14 M11 10 L13.5 7.5" stroke="#fff" stroke-width="1.5"/><circle cx="11" cy="14" r="1.4" fill="#fff"/></svg>
<div style="position:absolute;left:694px;top:1031.0px;line-height:27px;font-size:19px;color:#cccccc;white-space:nowrap;">.gitignore</div>
<div style="position:absolute;left:664px;top:1068.5px;width:18px;height:18px;background:#f5c518"></div>
<div style="position:absolute;left:667px;top:1074.5px;line-height:12px;font-size:11px;font-weight:bold;color:#333;letter-spacing:-0.5px">JS</div>
<div style="position:absolute;left:694px;top:1064.0px;line-height:27px;font-size:19px;color:#cccccc;white-space:nowrap;">app.js</div>
<div style="position:absolute;left:661px;top:1098.5px;line-height:24px;font-size:17px;color:#f5c518;white-space:nowrap;letter-spacing:-1.5px;font-weight:bold">{...}</div>
<div style="position:absolute;left:694px;top:1097.0px;line-height:27px;font-size:19px;color:#cccccc;white-space:nowrap;">app.json</div>
<svg style="position:absolute;left:663px;top:1132.5px;" width="22" height="22" viewBox="0 0 22 22" fill="none"><path d="M3.5 2.5 H20.5 L18.8 17.5 L10.5 20.5 L2.5 17.5 L3 13.5 H7 L6.8 15.2 L10.5 16.5 L14.6 15.2 L15 11.5 H5.7 L6.1 8 H15.4 L15.7 6 H3.1 Z" fill="#3b9cff"/></svg>
<div style="position:absolute;left:694px;top:1130.0px;line-height:27px;font-size:19px;color:#cccccc;white-space:nowrap;">app.wxss</div>
<div style="position:absolute;left:661px;top:1164.5px;line-height:24px;font-size:17px;color:#f5c518;white-space:nowrap;letter-spacing:-1.5px;font-weight:bold">{...}</div>
<div style="position:absolute;left:694px;top:1163.0px;line-height:27px;font-size:19px;color:#cccccc;white-space:nowrap;">project.config.json</div>
<div style="position:absolute;left:661px;top:1197.5px;line-height:24px;font-size:17px;color:#f5c518;white-space:nowrap;letter-spacing:-1.5px;font-weight:bold">{...}</div>
<div style="position:absolute;left:694px;top:1196.0px;line-height:27px;font-size:19px;color:#cccccc;white-space:nowrap;">project.private.config.json</div>
<div style="position:absolute;left:661px;top:1230.5px;line-height:24px;font-size:17px;color:#f5c518;white-space:nowrap;letter-spacing:-1.5px;font-weight:bold">{...}</div>
<div style="position:absolute;left:694px;top:1229.0px;line-height:27px;font-size:19px;color:#cccccc;white-space:nowrap;">sitemap.json</div>
<div style="position:absolute;left:610px;top:1461px;width:448px;height:25px;background:#383838;"></div>
<svg style="position:absolute;left:619px;top:1470.5px;" width="12" height="14" viewBox="0 0 12 14" fill="none"><path d="M3 2.5 L9.5 7 L3 11.5 Z" fill="#c0c0c0"/></svg>
<div style="position:absolute;left:639px;top:1466.0px;line-height:23px;font-size:16.5px;color:#c8c8c8;white-space:nowrap;font-weight:bold">大纲</div>
<div style="position:absolute;left:1058px;top:183px;width:2px;height:1303px;background:#262626;"></div>
<div style="position:absolute;left:1060px;top:138px;width:1500px;height:45px;background:#333333;"></div>
<div style="position:absolute;left:1089.4px;top:149.0px;line-height:24px;font-size:17px;color:#a8a8a8;white-space:nowrap;">构建</div>
<div style="position:absolute;left:1152.8px;top:149.0px;line-height:24px;font-size:17px;color:#f0f0f0;white-space:nowrap;">调试器</div>
<div style="position:absolute;left:1153px;top:179.5px;width:50px;height:2px;background:#e0e0e0;"></div>
<div style="position:absolute;left:1214px;top:147px;width:50px;height:27px;border-radius:14px;background:#cc4437"></div>
<div style="position:absolute;left:1209.0px;width:60px;text-align:center;top:148.5px;line-height:24px;font-size:17px;color:#fff;white-space:nowrap;">21, 6</div>
<div style="position:absolute;left:1293px;top:149.0px;line-height:24px;font-size:17px;color:#a8a8a8;white-space:nowrap;">问题</div>
<div style="position:absolute;left:1356px;top:149.0px;line-height:24px;font-size:17px;color:#a8a8a8;white-space:nowrap;">输出</div>
<div style="position:absolute;left:1419px;top:149.0px;line-height:24px;font-size:17px;color:#a8a8a8;white-space:nowrap;">终端</div>
<div style="position:absolute;left:1482px;top:149.0px;line-height:24px;font-size:17px;color:#a8a8a8;white-space:nowrap;">代码质量</div>
<svg style="position:absolute;left:2460px;top:152px;" width="24" height="24" viewBox="0 0 24 24" fill="none"><path d="M4.5 8.5 L12 16 L19.5 8.5" stroke="#ddd" stroke-width="1.7"/></svg>
<svg style="position:absolute;left:2509px;top:152px;" width="24" height="24" viewBox="0 0 24 24" fill="none"><path d="M5 5 L19 19 M19 5 L5 19" stroke="#ddd" stroke-width="1.8"/></svg>
<div style="position:absolute;left:1060px;top:183px;width:1500px;height:40px;background:#28292c;"></div>
<div style="position:absolute;left:1060px;top:223px;width:1500px;height:1px;background:#3d3e42;"></div>
<svg style="position:absolute;left:1073px;top:191px;" width="24" height="24" viewBox="0 0 24 24" fill="none"><path d="M7 20 H4.5 a1.5 1.5 0 0 1 -1.5 -1.5 V5 a1.5 1.5 0 0 1 1.5 -1.5 H18 a1.5 1.5 0 0 1 1.5 1.5 V10" stroke="#9a9a9a" stroke-width="1.7" fill="none"/><path d="M9.5 8.5 L20.2 12.5 L16.2 14 L19.5 17.8 L17.8 19.5 L14.5 15.8 L13 19.5 Z" fill="#9a9a9a"/></svg>
<div style="position:absolute;left:1111.5px;top:191px;width:1.5px;height:24px;background:#444;"></div>
<div style="position:absolute;left:1399px;top:183px;width:104px;height:40px;background:#000;"></div>
<div style="position:absolute;left:1139px;top:191.0px;line-height:24px;font-size:17.5px;color:#e3e3e3;white-space:nowrap;">Wxml</div>
<div style="position:absolute;left:1219.8px;top:191.0px;line-height:24px;font-size:17.5px;color:#e3e3e3;white-space:nowrap;">Console</div>
<div style="position:absolute;left:1319px;top:191.0px;line-height:24px;font-size:17.5px;color:#e3e3e3;white-space:nowrap;">Sources</div>
<div style="position:absolute;left:1417px;top:191.0px;line-height:24px;font-size:17.5px;color:#ffffff;white-space:nowrap;">Network</div>
<div style="position:absolute;left:1520px;top:191.0px;line-height:24px;font-size:17.5px;color:#e3e3e3;white-space:nowrap;">Performance</div>
<div style="position:absolute;left:1655.5px;top:191.0px;line-height:24px;font-size:17.5px;color:#e3e3e3;white-space:nowrap;">Memory</div>
<div style="position:absolute;left:1757px;top:191.0px;line-height:24px;font-size:17.5px;color:#e3e3e3;white-space:nowrap;">AppData</div>
<div style="position:absolute;left:1862.6px;top:191.0px;line-height:24px;font-size:17.5px;color:#e3e3e3;white-space:nowrap;">Storage</div>
<div style="position:absolute;left:1958px;top:191.0px;line-height:24px;font-size:17.5px;color:#e3e3e3;white-space:nowrap;">Security</div>
<div style="position:absolute;left:2070.3px;top:191.0px;line-height:24px;font-size:17.5px;color:#e3e3e3;white-space:nowrap;">Sensor</div>
<div style="position:absolute;left:2159px;top:191.0px;line-height:24px;font-size:17.5px;color:#e3e3e3;white-space:nowrap;">Mock</div>
<svg style="position:absolute;left:2230px;top:193px;" width="22" height="20" viewBox="0 0 22 20" fill="none"><path d="M4 5 L9 10 L4 15 M11 5 L16 10 L11 15" stroke="#c8c8c8" stroke-width="1.6"/></svg>
<svg style="position:absolute;left:2326px;top:194px;" width="18" height="18" viewBox="0 0 18 18" fill="none"><circle cx="9" cy="9" r="8" fill="#e8303d"/><path d="M6 6 L12 12 M12 6 L6 12" stroke="#fff" stroke-width="1.8"/></svg>
<div style="position:absolute;left:2349.4px;top:190.5px;line-height:25px;font-size:18px;color:#e3e3e3;white-space:nowrap;">21</div>
<svg style="position:absolute;left:2376px;top:194px;" width="18" height="17" viewBox="0 0 18 17" fill="none"><path d="M9 1 L17.5 16 H0.5 Z" fill="#f8c21b"/><path d="M9 6 V11 M9 12.5 V14" stroke="#28292c" stroke-width="1.8"/></svg>
<div style="position:absolute;left:2399px;top:190.5px;line-height:25px;font-size:18px;color:#e3e3e3;white-space:nowrap;">6</div>
<div style="position:absolute;left:2424px;top:191px;width:1px;height:24px;background:#4a4a4a;"></div>
<svg style="position:absolute;left:2440px;top:191px;" width="24" height="24" viewBox="0 0 24 24" fill="none"><path d="M12 2 L14 2 L14.6 5 L17 6 L19.6 4.3 L21 5.7 L19.3 8.3 L20.3 10.7 L23.3 11.3 V13.3 L20.3 13.9 L19.3 16.3 L21 18.9 L19.6 20.3 L17 18.6 L14.6 19.6 L14 22.6 H12 L11.4 19.6 L9 18.6 L6.4 20.3 L5 18.9 L6.7 16.3 L5.7 13.9 L2.7 13.3 V11.3 L5.7 10.7 L6.7 8.3 L5 5.7 L6.4 4.3 L9 6 L11.4 5 Z" fill="#9a9a9a"/><circle cx="13" cy="12.3" r="3.5" fill="#28292c"/></svg>
<svg style="position:absolute;left:2484px;top:191px;" width="20" height="24" viewBox="0 0 20 24" fill="none"><circle cx="10" cy="4.5" r="2" fill="#9a9a9a"/><circle cx="10" cy="12" r="2" fill="#9a9a9a"/><circle cx="10" cy="19.5" r="2" fill="#9a9a9a"/></svg>
<svg style="position:absolute;left:2521px;top:191px;" width="30" height="24" viewBox="0 0 30 24" fill="none"><rect x="7.5" y="3" width="19" height="13" stroke="#9a9a9a" stroke-width="2.2"/><path d="M3 8 V20.5 H21" stroke="#9a9a9a" stroke-width="2.2"/></svg>
<div style="position:absolute;left:1060px;top:224px;width:1500px;height:39px;background:#28292c;"></div>
<div style="position:absolute;left:1060px;top:263px;width:1500px;height:1px;background:#3d3e42;"></div>
<svg style="position:absolute;left:1060px;top:223px;" width="190" height="40" viewBox="0 0 190 40" fill="none"><g transform="translate(-1060,-223)"><circle cx="1084" cy="242.8" r="12" fill="#e8453c" opacity="0.22"/><circle cx="1084" cy="242.8" r="10.3" fill="#e8453c" opacity="0.35"/><circle cx="1084" cy="242.8" r="9" fill="#fd4b4b"/><circle cx="1126.4" cy="243.5" r="8.4" stroke="#9a9a9a" stroke-width="2.4" fill="none"/><path d="M1120.5 237.6 L1132.3 249.4" stroke="#9a9a9a" stroke-width="2.6"/><path d="M1172.2 236.8 H1191.3 L1184.6 245 V252 Q1182 254.2 1179 252 V245 Z" stroke="#1b80d2" stroke-width="2" fill="#1e4c72" stroke-linejoin="round"/><circle cx="1221.2" cy="241" r="7.2" stroke="#9a9a9a" stroke-width="2.2" fill="none"/><path d="M1226.4 246.2 L1233 252.8" stroke="#9a9a9a" stroke-width="2.4"/></g></svg>
<div style="position:absolute;left:1153.5px;top:231px;width:1px;height:24px;background:#4a4a4a;"></div>
<div style="position:absolute;left:1251.5px;top:232px;width:1px;height:22px;background:#4a4a4a;"></div>
<div style="position:absolute;left:1267.4px;top:235.5px;width:17px;height:17px;border:1.6px solid #8a8a8a;border-radius:3px"></div>
<div style="position:absolute;left:1294.4px;top:232.0px;line-height:24px;font-size:17.2px;color:#e3e3e3;white-space:nowrap;">Preserve log</div>
<div style="position:absolute;left:1408px;top:235.5px;width:17px;height:17px;border:1.6px solid #8a8a8a;border-radius:3px"></div>
<div style="position:absolute;left:1436px;top:232.0px;line-height:24px;font-size:17.1px;color:#e3e3e3;white-space:nowrap;">Disable cache</div>
<div style="position:absolute;left:1558px;top:232px;width:1px;height:22px;background:#4a4a4a;"></div>
<div style="position:absolute;left:1573.7px;top:232.5px;line-height:24px;font-size:17.5px;color:#e3e3e3;white-space:nowrap;">Online</div>
<svg style="position:absolute;left:1664px;top:236px;" width="16" height="14" viewBox="0 0 16 14" fill="none"><path d="M2 3 H14 L8 11 Z" fill="#9a9a9a"/></svg>
<div style="position:absolute;left:1695.7px;top:232px;width:1px;height:22px;background:#4a4a4a;"></div>
<svg style="position:absolute;left:1712px;top:232px;" width="22" height="22" viewBox="0 0 22 22" fill="none"><path d="M11 3 L18 10.5 H14 V16 H8 V10.5 H4 Z" fill="#9a9a9a"/><rect x="3.5" y="18" width="15" height="2" fill="#9a9a9a"/></svg>
<svg style="position:absolute;left:1754px;top:232px;" width="22" height="22" viewBox="0 0 22 22" fill="none"><path d="M11 17 L18 9.5 H14 V3 H8 V9.5 H4 Z" fill="#9a9a9a"/><rect x="3.5" y="18" width="15" height="2" fill="#9a9a9a"/></svg>
<div style="position:absolute;left:2508px;top:232px;width:1px;height:22px;background:#4a4a4a;"></div>
<svg style="position:absolute;left:2524px;top:231px;" width="24" height="24" viewBox="0 0 24 24" fill="none"><path d="M12 2 L14 2 L14.6 5 L17 6 L19.6 4.3 L21 5.7 L19.3 8.3 L20.3 10.7 L23.3 11.3 V13.3 L20.3 13.9 L19.3 16.3 L21 18.9 L19.6 20.3 L17 18.6 L14.6 19.6 L14 22.6 H12 L11.4 19.6 L9 18.6 L6.4 20.3 L5 18.9 L6.7 16.3 L5.7 13.9 L2.7 13.3 V11.3 L5.7 10.7 L6.7 8.3 L5 5.7 L6.4 4.3 L9 6 L11.4 5 Z" fill="#9a9a9a"/><circle cx="13" cy="12.3" r="3.5" fill="#28292c"/></svg>
<div style="position:absolute;left:1060px;top:263px;width:1500px;height:38px;background:#28292c;"></div>
<div style="position:absolute;left:1060px;top:301px;width:1500px;height:1px;background:#3d3e42;"></div>
<div style="position:absolute;left:1065px;top:268px;width:247px;height:28.5px;border:2px solid #1b74c9;background:#232323"></div>
<div style="position:absolute;left:1071px;top:270.0px;line-height:25px;font-size:18px;color:#bdbdbd;white-space:nowrap;">Filter</div>
<div style="position:absolute;left:1330.4px;top:273.5px;width:17px;height:17px;border:1.6px solid #8a8a8a;border-radius:3px"></div>
<div style="position:absolute;left:1357.4px;top:272.0px;line-height:24px;font-size:17.1px;color:#e3e3e3;white-space:nowrap;">Hide data URLs</div>
<div style="position:absolute;left:1487.4px;top:267.5px;width:29.2px;height:31.5px;border-radius:7px;background:#5c5c5c"></div>
<div style="position:absolute;left:1482.0px;width:40px;text-align:center;top:271.0px;line-height:24px;font-size:17.5px;color:#a8a8a8;white-space:nowrap;">All</div>
<div style="position:absolute;left:1523px;top:270px;width:1px;height:24px;background:#4a4a4a;"></div>
<div style="position:absolute;left:1534.3px;top:272.5px;line-height:25px;font-size:18px;color:#e8e8e8;white-space:nowrap;">Cloud</div>
<div style="position:absolute;left:1596px;top:272.5px;line-height:25px;font-size:18px;color:#e8e8e8;white-space:nowrap;">XHR</div>
<div style="position:absolute;left:1646px;top:272.5px;line-height:25px;font-size:18px;color:#e8e8e8;white-space:nowrap;">JS</div>
<div style="position:absolute;left:1677px;top:272.5px;line-height:25px;font-size:18px;color:#e8e8e8;white-space:nowrap;">CSS</div>
<div style="position:absolute;left:1722.4px;top:272.5px;line-height:25px;font-size:18px;color:#e8e8e8;white-space:nowrap;">Img</div>
<div style="position:absolute;left:1768px;top:272.5px;line-height:25px;font-size:18px;color:#e8e8e8;white-space:nowrap;">Media</div>
<div style="position:absolute;left:1832.4px;top:272.5px;line-height:25px;font-size:18px;color:#e8e8e8;white-space:nowrap;">Font</div>
<div style="position:absolute;left:1883.7px;top:272.5px;line-height:25px;font-size:18px;color:#e8e8e8;white-space:nowrap;">Doc</div>
<div style="position:absolute;left:1930px;top:272.5px;line-height:25px;font-size:18px;color:#e8e8e8;white-space:nowrap;">WS</div>
<div style="position:absolute;left:1971px;top:272.5px;line-height:25px;font-size:18px;color:#e8e8e8;white-space:nowrap;">Manifest</div>
<div style="position:absolute;left:2055px;top:272.5px;line-height:25px;font-size:18px;color:#e8e8e8;white-space:nowrap;">Other</div>
<div style="position:absolute;left:2123px;top:273.5px;width:17px;height:17px;border:1.6px solid #8a8a8a;border-radius:3px"></div>
<div style="position:absolute;left:2150.4px;top:272.0px;line-height:24px;font-size:17.5px;color:#e3e3e3;white-space:nowrap;">Has blocked cookies</div>
<div style="position:absolute;left:2327px;top:273.5px;width:17px;height:17px;border:1.6px solid #8a8a8a;border-radius:3px"></div>
<div style="position:absolute;left:2354px;top:272.0px;line-height:24px;font-size:17.1px;color:#e3e3e3;white-space:nowrap;">Blocked Requests</div>
<div style="position:absolute;left:1060px;top:302px;width:1500px;height:121px;background:#232323;"></div>
<div style="position:absolute;left:1060px;top:422px;width:1500px;height:2px;background:#3e3e3e;"></div>
<div style="position:absolute;left:1060px;top:302px;width:4px;height:26px;background:#5a5a5a;"></div>
<div style="position:absolute;left:1061px;top:328px;width:1px;height:94px;background:#6a5a5a;"></div>
<div style="position:absolute;left:1210.0px;top:302px;width:2px;height:120px;background:#3a3a3a;"></div>
<div style="position:absolute;right:1353.0px;top:309.0px;line-height:20px;font-size:14px;color:#e8e8e8;white-space:nowrap;">200000 ms</div>
<div style="position:absolute;left:1360.6px;top:302px;width:2px;height:120px;background:#3a3a3a;"></div>
<div style="position:absolute;right:1202.4px;top:309.0px;line-height:20px;font-size:14px;color:#e8e8e8;white-space:nowrap;">400000 ms</div>
<div style="position:absolute;left:1511.2px;top:302px;width:2px;height:120px;background:#3a3a3a;"></div>
<div style="position:absolute;right:1051.8px;top:309.0px;line-height:20px;font-size:14px;color:#e8e8e8;white-space:nowrap;">600000 ms</div>
<div style="position:absolute;left:1661.8px;top:302px;width:2px;height:120px;background:#3a3a3a;"></div>
<div style="position:absolute;right:901.2px;top:309.0px;line-height:20px;font-size:14px;color:#e8e8e8;white-space:nowrap;">800000 ms</div>
<div style="position:absolute;left:1812.4px;top:302px;width:2px;height:120px;background:#3a3a3a;"></div>
<div style="position:absolute;right:750.5999999999999px;top:309.0px;line-height:20px;font-size:14px;color:#e8e8e8;white-space:nowrap;">1000000 ms</div>
<div style="position:absolute;left:1963.0px;top:302px;width:2px;height:120px;background:#3a3a3a;"></div>
<div style="position:absolute;right:600.0px;top:309.0px;line-height:20px;font-size:14px;color:#e8e8e8;white-space:nowrap;">1200000 ms</div>
<div style="position:absolute;left:2113.6px;top:302px;width:2px;height:120px;background:#3a3a3a;"></div>
<div style="position:absolute;right:449.4000000000001px;top:309.0px;line-height:20px;font-size:14px;color:#e8e8e8;white-space:nowrap;">1400000 ms</div>
<div style="position:absolute;left:2264.2px;top:302px;width:2px;height:120px;background:#3a3a3a;"></div>
<div style="position:absolute;right:298.8000000000002px;top:309.0px;line-height:20px;font-size:14px;color:#e8e8e8;white-space:nowrap;">1600000 ms</div>
<div style="position:absolute;left:2414.8px;top:302px;width:2px;height:120px;background:#3a3a3a;"></div>
<div style="position:absolute;right:148.19999999999982px;top:309.0px;line-height:20px;font-size:14px;color:#e8e8e8;white-space:nowrap;">1800000 ms</div>
<div style="position:absolute;right:0px;top:309.0px;line-height:20px;font-size:14px;color:#e8e8e8;white-space:nowrap;">2000000 m</div>
<div style="position:absolute;left:2260px;top:338px;width:2px;height:2px;background:#aaa;"></div>
<div style="position:absolute;left:2256.5px;top:374px;width:7px;height:3px;background:#1aa7ec;"></div>
<div style="position:absolute;left:2261.5px;top:379px;width:2px;height:3px;background:#1aa7ec;"></div>
<div style="position:absolute;left:2257.5px;top:383px;width:6px;height:3px;background:#1aa7ec;"></div>
<div style="position:absolute;left:2257.5px;top:387px;width:6px;height:3px;background:#1aa7ec;"></div>
<div style="position:absolute;left:2257.5px;top:391px;width:6px;height:3px;background:#1aa7ec;"></div>
<div style="position:absolute;left:2261.5px;top:395px;width:2px;height:3px;background:#1aa7ec;"></div>
<div style="position:absolute;left:2259.5px;top:400px;width:4px;height:3px;background:#1aa7ec;"></div>
<div style="position:absolute;left:2557px;top:302px;width:3px;height:26px;background:#5a5a5a;"></div>
<div style="position:absolute;left:1060px;top:424px;width:1500px;height:40px;background:#292a2e;"></div>
<div style="position:absolute;left:1060px;top:464px;width:1500px;height:1px;background:#3d3e42;"></div>
<div style="position:absolute;left:1506.5px;top:425px;width:1px;height:1020px;background:#3a3a3a;"></div>
<div style="position:absolute;left:1639.5px;top:425px;width:1px;height:1020px;background:#3a3a3a;"></div>
<div style="position:absolute;left:1772.5px;top:425px;width:1px;height:1020px;background:#3a3a3a;"></div>
<div style="position:absolute;left:1993.5px;top:425px;width:1px;height:1020px;background:#3a3a3a;"></div>
<div style="position:absolute;left:2125.3px;top:425px;width:1px;height:1020px;background:#3a3a3a;"></div>
<div style="position:absolute;left:2259.4px;top:425px;width:1px;height:1020px;background:#3a3a3a;"></div>
<div style="position:absolute;left:1068px;top:431.5px;line-height:25px;font-size:18px;color:#e8e8e8;white-space:nowrap;">Name</div>
<div style="position:absolute;left:1513px;top:431.5px;line-height:25px;font-size:18px;color:#e8e8e8;white-space:nowrap;">Status</div>
<div style="position:absolute;left:1646px;top:431.5px;line-height:25px;font-size:18px;color:#e8e8e8;white-space:nowrap;">Type</div>
<div style="position:absolute;left:1779px;top:431.5px;line-height:25px;font-size:18px;color:#e8e8e8;white-space:nowrap;">Initiator</div>
<div style="position:absolute;left:2000.5px;top:431.5px;line-height:25px;font-size:18px;color:#e8e8e8;white-space:nowrap;">Size</div>
<div style="position:absolute;left:2132px;top:431.5px;line-height:25px;font-size:18px;color:#e8e8e8;white-space:nowrap;">Time</div>
<div style="position:absolute;left:2266.4px;top:431.5px;line-height:25px;font-size:18px;color:#e8e8e8;white-space:nowrap;">Waterfall</div>
<svg style="position:absolute;left:2528px;top:436px;" width="20" height="16" viewBox="0 0 20 16" fill="none"><path d="M3 13 L10 3 L17 13 Z" fill="#8a8a8a"/></svg>
<div style="position:absolute;left:1060px;top:465px;width:1500px;height:980px;overflow:hidden">
<div style="position:absolute;left:0;top:-11px;width:1500px;height:32px;background:#2a2a2a"></div>
<div style="position:absolute;left:12px;top:-5px;width:16px;height:20px;background:#fff;box-shadow:-1px 1px 0 #888"></div>
<div style="position:absolute;left:36.299999999999955px;top:-7.5px;line-height:25px;font-size:18px;color:#e8e8e8;white-space:nowrap;">list</div>
<div style="position:absolute;left:453px;top:-7.5px;line-height:25px;font-size:18px;color:#e8e8e8;white-space:nowrap;">200</div>
<div style="position:absolute;left:586px;top:-7.5px;line-height:25px;font-size:18px;color:#e8e8e8;white-space:nowrap;">xhr</div>
<div style="position:absolute;left:719px;top:-7.5px;line-height:25px;font-size:18px;color:#e8e8e8;white-space:nowrap;text-decoration:underline">index.js:1</div>
<div style="position:absolute;right:442px;top:-7.5px;line-height:25px;font-size:18px;color:#e8e8e8;white-space:nowrap;">1.6 kB</div>
<div style="position:absolute;right:308px;top:-7.5px;line-height:25px;font-size:18px;color:#e8e8e8;white-space:nowrap;">21 ms</div>
<div style="position:absolute;left:1475.5px;top:-3px;width:3px;height:16px;background:#1aa7ec;border-radius:1px"></div>
<div style="position:absolute;left:0;top:21px;width:1500px;height:32px;background:#242424"></div>
<div style="position:absolute;left:12px;top:27px;width:16px;height:20px;background:#fff;box-shadow:-1px 1px 0 #888"></div>
<div style="position:absolute;left:36.299999999999955px;top:24.5px;line-height:25px;font-size:18px;color:#e5493a;white-space:nowrap;">list</div>
<div style="position:absolute;left:453px;top:24.5px;line-height:25px;font-size:18px;color:#e5493a;white-space:nowrap;">404</div>
<div style="position:absolute;left:586px;top:24.5px;line-height:25px;font-size:18px;color:#e5493a;white-space:nowrap;">xhr</div>
<div style="position:absolute;left:719px;top:24.5px;line-height:25px;font-size:18px;color:#e5493a;white-space:nowrap;text-decoration:underline">index.js:1</div>
<div style="position:absolute;right:442px;top:24.5px;line-height:25px;font-size:18px;color:#e5493a;white-space:nowrap;">264 B</div>
<div style="position:absolute;right:308px;top:24.5px;line-height:25px;font-size:18px;color:#e5493a;white-space:nowrap;">7 ms</div>
<div style="position:absolute;left:1475.5px;top:29px;width:3px;height:16px;background:#1aa7ec;border-radius:1px"></div>
<div style="position:absolute;left:0;top:53px;width:1500px;height:32px;background:#2a2a2a"></div>
<div style="position:absolute;left:12px;top:59px;width:16px;height:20px;background:#fff;box-shadow:-1px 1px 0 #888"></div>
<div style="position:absolute;left:36.299999999999955px;top:56.5px;line-height:25px;font-size:18px;color:#e8e8e8;white-space:nowrap;">list?categoryId=16</div>
<div style="position:absolute;left:453px;top:56.5px;line-height:25px;font-size:18px;color:#e8e8e8;white-space:nowrap;">200</div>
<div style="position:absolute;left:586px;top:56.5px;line-height:25px;font-size:18px;color:#e8e8e8;white-space:nowrap;">xhr</div>
<div style="position:absolute;left:719px;top:56.5px;line-height:25px;font-size:18px;color:#e8e8e8;white-space:nowrap;text-decoration:underline">index.js:1</div>
<div style="position:absolute;right:442px;top:56.5px;line-height:25px;font-size:18px;color:#e8e8e8;white-space:nowrap;">1.3 kB</div>
<div style="position:absolute;right:308px;top:56.5px;line-height:25px;font-size:18px;color:#e8e8e8;white-space:nowrap;">106 ms</div>
<div style="position:absolute;left:1475.5px;top:61px;width:3px;height:16px;background:#1aa7ec;border-radius:1px"></div>
<div style="position:absolute;left:0;top:85px;width:1500px;height:32px;background:#242424"></div>
<svg style="position:absolute;left:12px;top:91px;" width="20" height="21" viewBox="0 0 20 21" fill="none"><path d="M1.5 1.5 H15 L18.5 5 V20 H1.5 Z" fill="#efefef" stroke="#8a8a8a" stroke-width="1"/><path d="M3 3.5 H14.5 L17 6 V18.5 H3 Z" fill="#c9def2"/><path d="M6.5 9 a2.5 2.5 0 0 1 4.5 -1.5 a2 2 0 0 1 3 1.5 Z" fill="#fff"/><path d="M3 18.5 C6 14.5 12 13 17 14.5 V18.5 Z" fill="#45ad45"/><path d="M15 1.5 V5 H18.5" stroke="#8a8a8a" stroke-width="1" fill="#fff"/></svg>
<div style="position:absolute;left:36.299999999999955px;top:88.5px;line-height:25px;font-size:18px;color:#e5493a;white-space:nowrap;">8cfcc576-4b66-4a09-ac68-ad5b273c2590.png</div>
<div style="position:absolute;left:453px;top:88.5px;line-height:25px;font-size:18px;color:#e5493a;white-space:nowrap;">403</div>
<div style="position:absolute;left:586px;top:88.5px;line-height:25px;font-size:18px;color:#e5493a;white-space:nowrap;">xml</div>
<div style="position:absolute;left:719px;top:89.0px;line-height:24px;font-size:17.2px;color:#e5493a;white-space:nowrap;text-decoration:underline">:53531/__pageframe__/p...</div>
<div style="position:absolute;right:442px;top:88.5px;line-height:25px;font-size:18px;color:#e5493a;white-space:nowrap;">334 B</div>
<div style="position:absolute;right:308px;top:88.5px;line-height:25px;font-size:18px;color:#e5493a;white-space:nowrap;">492 ms</div>
<div style="position:absolute;left:1475.5px;top:93px;width:3px;height:16px;background:#1aa7ec;border-radius:1px"></div>
<div style="position:absolute;left:0;top:117px;width:1500px;height:32px;background:#2a2a2a"></div>
<svg style="position:absolute;left:12px;top:123px;" width="20" height="21" viewBox="0 0 20 21" fill="none"><path d="M1.5 1.5 H15 L18.5 5 V20 H1.5 Z" fill="#efefef" stroke="#8a8a8a" stroke-width="1"/><path d="M3 3.5 H14.5 L17 6 V18.5 H3 Z" fill="#c9def2"/><path d="M6.5 9 a2.5 2.5 0 0 1 4.5 -1.5 a2 2 0 0 1 3 1.5 Z" fill="#fff"/><path d="M3 18.5 C6 14.5 12 13 17 14.5 V18.5 Z" fill="#45ad45"/><path d="M15 1.5 V5 H18.5" stroke="#8a8a8a" stroke-width="1" fill="#fff"/></svg>
<div style="position:absolute;left:36.299999999999955px;top:120.5px;line-height:25px;font-size:18px;color:#e5493a;white-space:nowrap;">a101a1e9-8f8b-47b2-afa4-1abd47ea0a87.png</div>
<div style="position:absolute;left:453px;top:120.5px;line-height:25px;font-size:18px;color:#e5493a;white-space:nowrap;">403</div>
<div style="position:absolute;left:586px;top:120.5px;line-height:25px;font-size:18px;color:#e5493a;white-space:nowrap;">xml</div>
<div style="position:absolute;left:719px;top:121.0px;line-height:24px;font-size:17.2px;color:#e5493a;white-space:nowrap;text-decoration:underline">:53531/__pageframe__/p...</div>
<div style="position:absolute;right:442px;top:120.5px;line-height:25px;font-size:18px;color:#e5493a;white-space:nowrap;">334 B</div>
<div style="position:absolute;right:308px;top:120.5px;line-height:25px;font-size:18px;color:#e5493a;white-space:nowrap;">492 ms</div>
<div style="position:absolute;left:1475.5px;top:125px;width:3px;height:16px;background:#1aa7ec;border-radius:1px"></div>
<div style="position:absolute;left:0;top:149px;width:1500px;height:32px;background:#242424"></div>
<svg style="position:absolute;left:12px;top:155px;" width="20" height="21" viewBox="0 0 20 21" fill="none"><path d="M1.5 1.5 H15 L18.5 5 V20 H1.5 Z" fill="#efefef" stroke="#8a8a8a" stroke-width="1"/><path d="M3 3.5 H14.5 L17 6 V18.5 H3 Z" fill="#c9def2"/><path d="M6.5 9 a2.5 2.5 0 0 1 4.5 -1.5 a2 2 0 0 1 3 1.5 Z" fill="#fff"/><path d="M3 18.5 C6 14.5 12 13 17 14.5 V18.5 Z" fill="#45ad45"/><path d="M15 1.5 V5 H18.5" stroke="#8a8a8a" stroke-width="1" fill="#fff"/></svg>
<div style="position:absolute;left:36.299999999999955px;top:152.5px;line-height:25px;font-size:18px;color:#e5493a;white-space:nowrap;">b544d3ba-a1ae-4d20-a860-81cb5dec9e03.png</div>
<div style="position:absolute;left:453px;top:152.5px;line-height:25px;font-size:18px;color:#e5493a;white-space:nowrap;">403</div>
<div style="position:absolute;left:586px;top:152.5px;line-height:25px;font-size:18px;color:#e5493a;white-space:nowrap;">xml</div>
<div style="position:absolute;left:719px;top:153.0px;line-height:24px;font-size:17.2px;color:#e5493a;white-space:nowrap;text-decoration:underline">:53531/__pageframe__/p...</div>
<div style="position:absolute;right:442px;top:152.5px;line-height:25px;font-size:18px;color:#e5493a;white-space:nowrap;">334 B</div>
<div style="position:absolute;right:308px;top:152.5px;line-height:25px;font-size:18px;color:#e5493a;white-space:nowrap;">498 ms</div>
<div style="position:absolute;left:1475.5px;top:157px;width:3px;height:16px;background:#1aa7ec;border-radius:1px"></div>
<div style="position:absolute;left:0;top:181px;width:1500px;height:32px;background:#2a2a2a"></div>
<div style="position:absolute;left:12px;top:187px;width:16px;height:20px;background:#fff;box-shadow:-1px 1px 0 #888"></div>
<div style="position:absolute;left:36.299999999999955px;top:184.5px;line-height:25px;font-size:18px;color:#e8e8e8;white-space:nowrap;">list?categoryId=17</div>
<div style="position:absolute;left:453px;top:184.5px;line-height:25px;font-size:18px;color:#e8e8e8;white-space:nowrap;">200</div>
<div style="position:absolute;left:586px;top:184.5px;line-height:25px;font-size:18px;color:#e8e8e8;white-space:nowrap;">xhr</div>
<div style="position:absolute;left:719px;top:184.5px;line-height:25px;font-size:18px;color:#e8e8e8;white-space:nowrap;text-decoration:underline">index.js:1</div>
<div style="position:absolute;right:442px;top:184.5px;line-height:25px;font-size:18px;color:#e8e8e8;white-space:nowrap;">1.1 kB</div>
<div style="position:absolute;right:308px;top:184.5px;line-height:25px;font-size:18px;color:#e8e8e8;white-space:nowrap;">16 ms</div>
<div style="position:absolute;left:1475.5px;top:189px;width:3px;height:16px;background:#1aa7ec;border-radius:1px"></div>
<div style="position:absolute;left:0;top:213px;width:1500px;height:32px;background:#242424"></div>
<svg style="position:absolute;left:12px;top:219px;" width="20" height="21" viewBox="0 0 20 21" fill="none"><path d="M1.5 1.5 H15 L18.5 5 V20 H1.5 Z" fill="#efefef" stroke="#8a8a8a" stroke-width="1"/><path d="M3 3.5 H14.5 L17 6 V18.5 H3 Z" fill="#c9def2"/><path d="M6.5 9 a2.5 2.5 0 0 1 4.5 -1.5 a2 2 0 0 1 3 1.5 Z" fill="#fff"/><path d="M3 18.5 C6 14.5 12 13 17 14.5 V18.5 Z" fill="#45ad45"/><path d="M15 1.5 V5 H18.5" stroke="#8a8a8a" stroke-width="1" fill="#fff"/></svg>
<div style="position:absolute;left:36.299999999999955px;top:216.5px;line-height:25px;font-size:18px;color:#e8e8e8;white-space:nowrap;">btn_add.png</div>
<div style="position:absolute;left:453px;top:216.5px;line-height:25px;font-size:18px;color:#e8e8e8;white-space:nowrap;">307</div>
<div style="position:absolute;left:586px;top:216.5px;line-height:25px;font-size:18px;color:#e8e8e8;white-space:nowrap;">/ Redirect</div>
<div style="position:absolute;left:719px;top:216.5px;line-height:25px;font-size:18px;color:#a8a8a8;white-space:nowrap;">Other</div>
<div style="position:absolute;right:442px;top:216.5px;line-height:25px;font-size:18px;color:#e8e8e8;white-space:nowrap;">0 B</div>
<div style="position:absolute;right:308px;top:216.5px;line-height:25px;font-size:18px;color:#e8e8e8;white-space:nowrap;">10 ms</div>
<div style="position:absolute;left:0;top:245px;width:1500px;height:32px;background:#2a2a2a"></div>
<svg style="position:absolute;left:12px;top:251px;" width="20" height="21" viewBox="0 0 20 21" fill="none"><path d="M1.5 1.5 H15 L18.5 5 V20 H1.5 Z" fill="#efefef" stroke="#8a8a8a" stroke-width="1"/><path d="M3 3.5 H14.5 L17 6 V18.5 H3 Z" fill="#c9def2"/><path d="M6.5 9 a2.5 2.5 0 0 1 4.5 -1.5 a2 2 0 0 1 3 1.5 Z" fill="#fff"/><path d="M3 18.5 C6 14.5 12 13 17 14.5 V18.5 Z" fill="#45ad45"/><path d="M15 1.5 V5 H18.5" stroke="#8a8a8a" stroke-width="1" fill="#fff"/></svg>
<div style="position:absolute;left:36.299999999999955px;top:248.5px;line-height:25px;font-size:18px;color:#e5493a;white-space:nowrap;">7a55b845-1f2b-41fa-9486-76d187ee9ee1.png</div>
<div style="position:absolute;left:453px;top:248.5px;line-height:25px;font-size:18px;color:#e5493a;white-space:nowrap;">403</div>
<div style="position:absolute;left:586px;top:248.5px;line-height:25px;font-size:18px;color:#e5493a;white-space:nowrap;">xml</div>
<div style="position:absolute;left:719px;top:248.5px;line-height:25px;font-size:18px;color:#a8a8a8;white-space:nowrap;">Other</div>
<div style="position:absolute;right:442px;top:248.5px;line-height:25px;font-size:18px;color:#e5493a;white-space:nowrap;">334 B</div>
<div style="position:absolute;right:308px;top:248.5px;line-height:25px;font-size:18px;color:#e5493a;white-space:nowrap;">43 ms</div>
<div style="position:absolute;left:1475.5px;top:253px;width:3px;height:16px;background:#1aa7ec;border-radius:1px"></div>
<div style="position:absolute;left:0;top:277px;width:1500px;height:32px;background:#242424"></div>
<svg style="position:absolute;left:12px;top:283px;" width="20" height="21" viewBox="0 0 20 21" fill="none"><path d="M1.5 1.5 H15 L18.5 5 V20 H1.5 Z" fill="#efefef" stroke="#8a8a8a" stroke-width="1"/><path d="M3 3.5 H14.5 L17 6 V18.5 H3 Z" fill="#c9def2"/><path d="M6.5 9 a2.5 2.5 0 0 1 4.5 -1.5 a2 2 0 0 1 3 1.5 Z" fill="#fff"/><path d="M3 18.5 C6 14.5 12 13 17 14.5 V18.5 Z" fill="#45ad45"/><path d="M15 1.5 V5 H18.5" stroke="#8a8a8a" stroke-width="1" fill="#fff"/></svg>
<div style="position:absolute;left:36.299999999999955px;top:280.5px;line-height:25px;font-size:18px;color:#e5493a;white-space:nowrap;">f5ac8455-4793-450c-97ba-173795c34626.png</div>
<div style="position:absolute;left:453px;top:280.5px;line-height:25px;font-size:18px;color:#e5493a;white-space:nowrap;">403</div>
<div style="position:absolute;left:586px;top:280.5px;line-height:25px;font-size:18px;color:#e5493a;white-space:nowrap;">xml</div>
<div style="position:absolute;left:719px;top:280.5px;line-height:25px;font-size:18px;color:#a8a8a8;white-space:nowrap;">Other</div>
<div style="position:absolute;right:442px;top:280.5px;line-height:25px;font-size:18px;color:#e5493a;white-space:nowrap;">334 B</div>
<div style="position:absolute;right:308px;top:280.5px;line-height:25px;font-size:18px;color:#e5493a;white-space:nowrap;">44 ms</div>
<div style="position:absolute;left:1475.5px;top:285px;width:3px;height:16px;background:#1aa7ec;border-radius:1px"></div>
<div style="position:absolute;left:0;top:309px;width:1500px;height:32px;background:#2a2a2a"></div>
<div style="position:absolute;left:12px;top:315px;width:16px;height:20px;background:#fff;box-shadow:-1px 1px 0 #888"></div>
<div style="position:absolute;left:16.5px;top:321.5px;width:7px;height:7px;border-radius:50%;background:#f2a900;border:1.5px solid #c88400"></div>
<div style="position:absolute;left:36.299999999999955px;top:312.5px;line-height:25px;font-size:18px;color:#e8e8e8;white-space:nowrap;">btn_add.png</div>
<div style="position:absolute;left:453px;top:312.5px;line-height:25px;font-size:18px;color:#e8e8e8;white-space:nowrap;">200</div>
<div style="position:absolute;left:586px;top:312.5px;line-height:25px;font-size:18px;color:#e8e8e8;white-space:nowrap;">png</div>
<div style="position:absolute;left:719px;top:312.5px;line-height:25px;font-size:18px;color:#e8e8e8;white-space:nowrap;text-decoration:underline">:53531/static/btn_add.p...</div>
<div style="position:absolute;right:442px;top:312.5px;line-height:25px;font-size:18px;color:#e8e8e8;white-space:nowrap;">1.2 kB</div>
<div style="position:absolute;right:308px;top:312.5px;line-height:25px;font-size:18px;color:#e8e8e8;white-space:nowrap;">9 ms</div>
<div style="position:absolute;left:1475.5px;top:317px;width:3px;height:16px;background:#1aa7ec;border-radius:1px"></div>
<div style="position:absolute;left:0;top:341px;width:1500px;height:32px;background:#242424"></div>
<svg style="position:absolute;left:12px;top:347px;" width="20" height="21" viewBox="0 0 20 21" fill="none"><path d="M1.5 1.5 H15 L18.5 5 V20 H1.5 Z" fill="#efefef" stroke="#8a8a8a" stroke-width="1"/><path d="M3 3.5 H14.5 L17 6 V18.5 H3 Z" fill="#c9def2"/><path d="M6.5 9 a2.5 2.5 0 0 1 4.5 -1.5 a2 2 0 0 1 3 1.5 Z" fill="#fff"/><path d="M3 18.5 C6 14.5 12 13 17 14.5 V18.5 Z" fill="#45ad45"/><path d="M15 1.5 V5 H18.5" stroke="#8a8a8a" stroke-width="1" fill="#fff"/></svg>
<div style="position:absolute;left:36.299999999999955px;top:344.5px;line-height:25px;font-size:18px;color:#e5493a;white-space:nowrap;">7694a5d8-7938-4e9d-8b9e-2075983a2e38.png</div>
<div style="position:absolute;left:453px;top:344.5px;line-height:25px;font-size:18px;color:#e5493a;white-space:nowrap;">403</div>
<div style="position:absolute;left:586px;top:344.5px;line-height:25px;font-size:18px;color:#e5493a;white-space:nowrap;">xml</div>
<div style="position:absolute;left:719px;top:344.5px;line-height:25px;font-size:18px;color:#a8a8a8;white-space:nowrap;">Other</div>
<div style="position:absolute;right:442px;top:344.5px;line-height:25px;font-size:18px;color:#e5493a;white-space:nowrap;">334 B</div>
<div style="position:absolute;right:308px;top:344.5px;line-height:25px;font-size:18px;color:#e5493a;white-space:nowrap;">41 ms</div>
<div style="position:absolute;left:1475.5px;top:349px;width:3px;height:16px;background:#1aa7ec;border-radius:1px"></div>
<div style="position:absolute;left:0;top:373px;width:1500px;height:32px;background:#2a2a2a"></div>
<div style="position:absolute;left:12px;top:379px;width:16px;height:20px;background:#fff;box-shadow:-1px 1px 0 #888"></div>
<div style="position:absolute;left:36.299999999999955px;top:376.5px;line-height:25px;font-size:18px;color:#e8e8e8;white-space:nowrap;">list?categoryId=18</div>
<div style="position:absolute;left:453px;top:376.5px;line-height:25px;font-size:18px;color:#e8e8e8;white-space:nowrap;">200</div>
<div style="position:absolute;left:586px;top:376.5px;line-height:25px;font-size:18px;color:#e8e8e8;white-space:nowrap;">xhr</div>
<div style="position:absolute;left:719px;top:376.5px;line-height:25px;font-size:18px;color:#e8e8e8;white-space:nowrap;text-decoration:underline">index.js:1</div>
<div style="position:absolute;right:442px;top:376.5px;line-height:25px;font-size:18px;color:#e8e8e8;white-space:nowrap;">1.4 kB</div>
<div style="position:absolute;right:308px;top:376.5px;line-height:25px;font-size:18px;color:#e8e8e8;white-space:nowrap;">20 ms</div>
<div style="position:absolute;left:1475.5px;top:381px;width:3px;height:16px;background:#1aa7ec;border-radius:1px"></div>
<div style="position:absolute;left:0;top:405px;width:1500px;height:32px;background:#242424"></div>
<svg style="position:absolute;left:12px;top:411px;" width="20" height="21" viewBox="0 0 20 21" fill="none"><path d="M1.5 1.5 H15 L18.5 5 V20 H1.5 Z" fill="#efefef" stroke="#8a8a8a" stroke-width="1"/><path d="M3 3.5 H14.5 L17 6 V18.5 H3 Z" fill="#c9def2"/><path d="M6.5 9 a2.5 2.5 0 0 1 4.5 -1.5 a2 2 0 0 1 3 1.5 Z" fill="#fff"/><path d="M3 18.5 C6 14.5 12 13 17 14.5 V18.5 Z" fill="#45ad45"/><path d="M15 1.5 V5 H18.5" stroke="#8a8a8a" stroke-width="1" fill="#fff"/></svg>
<div style="position:absolute;left:36.299999999999955px;top:408.5px;line-height:25px;font-size:18px;color:#e5493a;white-space:nowrap;">c18b5c67-3b71-466c-a75a-e63c6449f21c.png</div>
<div style="position:absolute;left:453px;top:408.5px;line-height:25px;font-size:18px;color:#e5493a;white-space:nowrap;">403</div>
<div style="position:absolute;left:586px;top:408.5px;line-height:25px;font-size:18px;color:#e5493a;white-space:nowrap;">xml</div>
<div style="position:absolute;left:719px;top:409.0px;line-height:24px;font-size:17.2px;color:#e5493a;white-space:nowrap;text-decoration:underline">:53531/__pageframe__/p...</div>
<div style="position:absolute;right:442px;top:408.5px;line-height:25px;font-size:18px;color:#e5493a;white-space:nowrap;">334 B</div>
<div style="position:absolute;right:308px;top:408.5px;line-height:25px;font-size:18px;color:#e5493a;white-space:nowrap;">34 ms</div>
<div style="position:absolute;left:1475.5px;top:413px;width:3px;height:16px;background:#1aa7ec;border-radius:1px"></div>
<div style="position:absolute;left:0;top:437px;width:1500px;height:32px;background:#2a2a2a"></div>
<svg style="position:absolute;left:12px;top:443px;" width="20" height="21" viewBox="0 0 20 21" fill="none"><path d="M1.5 1.5 H15 L18.5 5 V20 H1.5 Z" fill="#efefef" stroke="#8a8a8a" stroke-width="1"/><path d="M3 3.5 H14.5 L17 6 V18.5 H3 Z" fill="#c9def2"/><path d="M6.5 9 a2.5 2.5 0 0 1 4.5 -1.5 a2 2 0 0 1 3 1.5 Z" fill="#fff"/><path d="M3 18.5 C6 14.5 12 13 17 14.5 V18.5 Z" fill="#45ad45"/><path d="M15 1.5 V5 H18.5" stroke="#8a8a8a" stroke-width="1" fill="#fff"/></svg>
<div style="position:absolute;left:36.299999999999955px;top:440.5px;line-height:25px;font-size:18px;color:#e5493a;white-space:nowrap;">13da832f-ef2c-484d-8370-5934a1045a06.png</div>
<div style="position:absolute;left:453px;top:440.5px;line-height:25px;font-size:18px;color:#e5493a;white-space:nowrap;">403</div>
<div style="position:absolute;left:586px;top:440.5px;line-height:25px;font-size:18px;color:#e5493a;white-space:nowrap;">xml</div>
<div style="position:absolute;left:719px;top:440.5px;line-height:25px;font-size:18px;color:#a8a8a8;white-space:nowrap;">Other</div>
<div style="position:absolute;right:442px;top:440.5px;line-height:25px;font-size:18px;color:#e5493a;white-space:nowrap;">334 B</div>
<div style="position:absolute;right:308px;top:440.5px;line-height:25px;font-size:18px;color:#e5493a;white-space:nowrap;">34 ms</div>
<div style="position:absolute;left:1475.5px;top:445px;width:3px;height:16px;background:#1aa7ec;border-radius:1px"></div>
<div style="position:absolute;left:0;top:469px;width:1500px;height:32px;background:#242424"></div>
<svg style="position:absolute;left:12px;top:475px;" width="20" height="21" viewBox="0 0 20 21" fill="none"><path d="M1.5 1.5 H15 L18.5 5 V20 H1.5 Z" fill="#efefef" stroke="#8a8a8a" stroke-width="1"/><path d="M3 3.5 H14.5 L17 6 V18.5 H3 Z" fill="#c9def2"/><path d="M6.5 9 a2.5 2.5 0 0 1 4.5 -1.5 a2 2 0 0 1 3 1.5 Z" fill="#fff"/><path d="M3 18.5 C6 14.5 12 13 17 14.5 V18.5 Z" fill="#45ad45"/><path d="M15 1.5 V5 H18.5" stroke="#8a8a8a" stroke-width="1" fill="#fff"/></svg>
<div style="position:absolute;left:36.299999999999955px;top:472.5px;line-height:25px;font-size:18px;color:#e5493a;white-space:nowrap;">6080b118-e30a-4577-aab4-45042e3f88be.png</div>
<div style="position:absolute;left:453px;top:472.5px;line-height:25px;font-size:18px;color:#e5493a;white-space:nowrap;">403</div>
<div style="position:absolute;left:586px;top:472.5px;line-height:25px;font-size:18px;color:#e5493a;white-space:nowrap;">xml</div>
<div style="position:absolute;left:719px;top:472.5px;line-height:25px;font-size:18px;color:#a8a8a8;white-space:nowrap;">Other</div>
<div style="position:absolute;right:442px;top:472.5px;line-height:25px;font-size:18px;color:#e5493a;white-space:nowrap;">334 B</div>
<div style="position:absolute;right:308px;top:472.5px;line-height:25px;font-size:18px;color:#e5493a;white-space:nowrap;">34 ms</div>
<div style="position:absolute;left:1475.5px;top:477px;width:3px;height:16px;background:#1aa7ec;border-radius:1px"></div>
<div style="position:absolute;left:0;top:501px;width:1500px;height:32px;background:#2a2a2a"></div>
<svg style="position:absolute;left:12px;top:507px;" width="20" height="21" viewBox="0 0 20 21" fill="none"><path d="M1.5 1.5 H15 L18.5 5 V20 H1.5 Z" fill="#efefef" stroke="#8a8a8a" stroke-width="1"/><path d="M3 3.5 H14.5 L17 6 V18.5 H3 Z" fill="#c9def2"/><path d="M6.5 9 a2.5 2.5 0 0 1 4.5 -1.5 a2 2 0 0 1 3 1.5 Z" fill="#fff"/><path d="M3 18.5 C6 14.5 12 13 17 14.5 V18.5 Z" fill="#45ad45"/><path d="M15 1.5 V5 H18.5" stroke="#8a8a8a" stroke-width="1" fill="#fff"/></svg>
<div style="position:absolute;left:36.299999999999955px;top:504.5px;line-height:25px;font-size:18px;color:#e5493a;white-space:nowrap;">a80a4b8c-c93e-4f43-ac8a-856b0d5cc451.png</div>
<div style="position:absolute;left:453px;top:504.5px;line-height:25px;font-size:18px;color:#e5493a;white-space:nowrap;">403</div>
<div style="position:absolute;left:586px;top:504.5px;line-height:25px;font-size:18px;color:#e5493a;white-space:nowrap;">xml</div>
<div style="position:absolute;left:719px;top:504.5px;line-height:25px;font-size:18px;color:#a8a8a8;white-space:nowrap;">Other</div>
<div style="position:absolute;right:442px;top:504.5px;line-height:25px;font-size:18px;color:#e5493a;white-space:nowrap;">334 B</div>
<div style="position:absolute;right:308px;top:504.5px;line-height:25px;font-size:18px;color:#e5493a;white-space:nowrap;">55 ms</div>
<div style="position:absolute;left:1475.5px;top:509px;width:3px;height:16px;background:#1aa7ec;border-radius:1px"></div>
<div style="position:absolute;left:0;top:533px;width:1500px;height:32px;background:#242424"></div>
<div style="position:absolute;left:12px;top:539px;width:16px;height:20px;background:#fff;box-shadow:-1px 1px 0 #888"></div>
<div style="position:absolute;left:36.299999999999955px;top:536.5px;line-height:25px;font-size:18px;color:#e8e8e8;white-space:nowrap;">list?categoryId=19</div>
<div style="position:absolute;left:453px;top:536.5px;line-height:25px;font-size:18px;color:#e8e8e8;white-space:nowrap;">200</div>
<div style="position:absolute;left:586px;top:536.5px;line-height:25px;font-size:18px;color:#e8e8e8;white-space:nowrap;">xhr</div>
<div style="position:absolute;left:719px;top:536.5px;line-height:25px;font-size:18px;color:#e8e8e8;white-space:nowrap;text-decoration:underline">index.js:1</div>
<div style="position:absolute;right:442px;top:536.5px;line-height:25px;font-size:18px;color:#e8e8e8;white-space:nowrap;">1.6 kB</div>
<div style="position:absolute;right:308px;top:536.5px;line-height:25px;font-size:18px;color:#e8e8e8;white-space:nowrap;">19 ms</div>
<div style="position:absolute;left:1475.5px;top:541px;width:3px;height:16px;background:#1aa7ec;border-radius:1px"></div>
<div style="position:absolute;left:0;top:565px;width:1500px;height:32px;background:#2a2a2a"></div>
<svg style="position:absolute;left:12px;top:571px;" width="20" height="21" viewBox="0 0 20 21" fill="none"><path d="M1.5 1.5 H15 L18.5 5 V20 H1.5 Z" fill="#efefef" stroke="#8a8a8a" stroke-width="1"/><path d="M3 3.5 H14.5 L17 6 V18.5 H3 Z" fill="#c9def2"/><path d="M6.5 9 a2.5 2.5 0 0 1 4.5 -1.5 a2 2 0 0 1 3 1.5 Z" fill="#fff"/><path d="M3 18.5 C6 14.5 12 13 17 14.5 V18.5 Z" fill="#45ad45"/><path d="M15 1.5 V5 H18.5" stroke="#8a8a8a" stroke-width="1" fill="#fff"/></svg>
<div style="position:absolute;left:36.299999999999955px;top:568.5px;line-height:25px;font-size:18px;color:#e5493a;white-space:nowrap;">22f59feb-0d44-430e-a6cd-6a49f27453ca.png</div>
<div style="position:absolute;left:453px;top:568.5px;line-height:25px;font-size:18px;color:#e5493a;white-space:nowrap;">403</div>
<div style="position:absolute;left:586px;top:568.5px;line-height:25px;font-size:18px;color:#e5493a;white-space:nowrap;">xml</div>
<div style="position:absolute;left:719px;top:568.5px;line-height:25px;font-size:18px;color:#a8a8a8;white-space:nowrap;">Other</div>
<div style="position:absolute;right:442px;top:568.5px;line-height:25px;font-size:18px;color:#e5493a;white-space:nowrap;">334 B</div>
<div style="position:absolute;right:308px;top:568.5px;line-height:25px;font-size:18px;color:#e5493a;white-space:nowrap;">37 ms</div>
<div style="position:absolute;left:1475.5px;top:573px;width:3px;height:16px;background:#1aa7ec;border-radius:1px"></div>
<div style="position:absolute;left:0;top:597px;width:1500px;height:32px;background:#242424"></div>
<svg style="position:absolute;left:12px;top:603px;" width="20" height="21" viewBox="0 0 20 21" fill="none"><path d="M1.5 1.5 H15 L18.5 5 V20 H1.5 Z" fill="#efefef" stroke="#8a8a8a" stroke-width="1"/><path d="M3 3.5 H14.5 L17 6 V18.5 H3 Z" fill="#c9def2"/><path d="M6.5 9 a2.5 2.5 0 0 1 4.5 -1.5 a2 2 0 0 1 3 1.5 Z" fill="#fff"/><path d="M3 18.5 C6 14.5 12 13 17 14.5 V18.5 Z" fill="#45ad45"/><path d="M15 1.5 V5 H18.5" stroke="#8a8a8a" stroke-width="1" fill="#fff"/></svg>
<div style="position:absolute;left:36.299999999999955px;top:600.5px;line-height:25px;font-size:18px;color:#e5493a;white-space:nowrap;">e9ec4ba4-4b22-4fc8-9be0-4946e6aeb937.png</div>
<div style="position:absolute;left:453px;top:600.5px;line-height:25px;font-size:18px;color:#e5493a;white-space:nowrap;">403</div>
<div style="position:absolute;left:586px;top:600.5px;line-height:25px;font-size:18px;color:#e5493a;white-space:nowrap;">xml</div>
<div style="position:absolute;left:719px;top:600.5px;line-height:25px;font-size:18px;color:#a8a8a8;white-space:nowrap;">Other</div>
<div style="position:absolute;right:442px;top:600.5px;line-height:25px;font-size:18px;color:#e5493a;white-space:nowrap;">334 B</div>
<div style="position:absolute;right:308px;top:600.5px;line-height:25px;font-size:18px;color:#e5493a;white-space:nowrap;">39 ms</div>
<div style="position:absolute;left:1475.5px;top:605px;width:3px;height:16px;background:#1aa7ec;border-radius:1px"></div>
<div style="position:absolute;left:0;top:629px;width:1500px;height:32px;background:#2a2a2a"></div>
<svg style="position:absolute;left:12px;top:635px;" width="20" height="21" viewBox="0 0 20 21" fill="none"><path d="M1.5 1.5 H15 L18.5 5 V20 H1.5 Z" fill="#efefef" stroke="#8a8a8a" stroke-width="1"/><path d="M3 3.5 H14.5 L17 6 V18.5 H3 Z" fill="#c9def2"/><path d="M6.5 9 a2.5 2.5 0 0 1 4.5 -1.5 a2 2 0 0 1 3 1.5 Z" fill="#fff"/><path d="M3 18.5 C6 14.5 12 13 17 14.5 V18.5 Z" fill="#45ad45"/><path d="M15 1.5 V5 H18.5" stroke="#8a8a8a" stroke-width="1" fill="#fff"/></svg>
<div style="position:absolute;left:36.299999999999955px;top:632.5px;line-height:25px;font-size:18px;color:#e5493a;white-space:nowrap;">4879ed66-3860-4b28-ba14-306ac025fdec.png</div>
<div style="position:absolute;left:453px;top:632.5px;line-height:25px;font-size:18px;color:#e5493a;white-space:nowrap;">403</div>
<div style="position:absolute;left:586px;top:632.5px;line-height:25px;font-size:18px;color:#e5493a;white-space:nowrap;">xml</div>
<div style="position:absolute;left:719px;top:632.5px;line-height:25px;font-size:18px;color:#a8a8a8;white-space:nowrap;">Other</div>
<div style="position:absolute;right:442px;top:632.5px;line-height:25px;font-size:18px;color:#e5493a;white-space:nowrap;">334 B</div>
<div style="position:absolute;right:308px;top:632.5px;line-height:25px;font-size:18px;color:#e5493a;white-space:nowrap;">40 ms</div>
<div style="position:absolute;left:1475.5px;top:637px;width:3px;height:16px;background:#1aa7ec;border-radius:1px"></div>
<div style="position:absolute;left:0;top:661px;width:1500px;height:32px;background:#242424"></div>
<svg style="position:absolute;left:12px;top:667px;" width="20" height="21" viewBox="0 0 20 21" fill="none"><path d="M1.5 1.5 H15 L18.5 5 V20 H1.5 Z" fill="#efefef" stroke="#8a8a8a" stroke-width="1"/><path d="M3 3.5 H14.5 L17 6 V18.5 H3 Z" fill="#c9def2"/><path d="M6.5 9 a2.5 2.5 0 0 1 4.5 -1.5 a2 2 0 0 1 3 1.5 Z" fill="#fff"/><path d="M3 18.5 C6 14.5 12 13 17 14.5 V18.5 Z" fill="#45ad45"/><path d="M15 1.5 V5 H18.5" stroke="#8a8a8a" stroke-width="1" fill="#fff"/></svg>
<div style="position:absolute;left:36.299999999999955px;top:664.5px;line-height:25px;font-size:18px;color:#e5493a;white-space:nowrap;">3613d38e-5614-41c2-90ed-ff175bf50716.png</div>
<div style="position:absolute;left:453px;top:664.5px;line-height:25px;font-size:18px;color:#e5493a;white-space:nowrap;">403</div>
<div style="position:absolute;left:586px;top:664.5px;line-height:25px;font-size:18px;color:#e5493a;white-space:nowrap;">xml</div>
<div style="position:absolute;left:719px;top:664.5px;line-height:25px;font-size:18px;color:#a8a8a8;white-space:nowrap;">Other</div>
<div style="position:absolute;right:442px;top:664.5px;line-height:25px;font-size:18px;color:#e5493a;white-space:nowrap;">334 B</div>
<div style="position:absolute;right:308px;top:664.5px;line-height:25px;font-size:18px;color:#e5493a;white-space:nowrap;">43 ms</div>
<div style="position:absolute;left:1475.5px;top:669px;width:3px;height:16px;background:#1aa7ec;border-radius:1px"></div>
<div style="position:absolute;left:0;top:693px;width:1500px;height:32px;background:#2a2a2a"></div>
<div style="position:absolute;left:12px;top:699px;width:16px;height:20px;background:#fff;box-shadow:-1px 1px 0 #888"></div>
<div style="position:absolute;left:36.299999999999955px;top:696.5px;line-height:25px;font-size:18px;color:#e8e8e8;white-space:nowrap;">list?categoryId=20</div>
<div style="position:absolute;left:453px;top:696.5px;line-height:25px;font-size:18px;color:#e8e8e8;white-space:nowrap;">200</div>
<div style="position:absolute;left:586px;top:696.5px;line-height:25px;font-size:18px;color:#e8e8e8;white-space:nowrap;">xhr</div>
<div style="position:absolute;left:719px;top:696.5px;line-height:25px;font-size:18px;color:#e8e8e8;white-space:nowrap;text-decoration:underline">index.js:1</div>
<div style="position:absolute;right:442px;top:696.5px;line-height:25px;font-size:18px;color:#e8e8e8;white-space:nowrap;">1.7 kB</div>
<div style="position:absolute;right:308px;top:696.5px;line-height:25px;font-size:18px;color:#e8e8e8;white-space:nowrap;">24 ms</div>
<div style="position:absolute;left:1475.5px;top:701px;width:3px;height:16px;background:#1aa7ec;border-radius:1px"></div>
<div style="position:absolute;left:0;top:725px;width:1500px;height:32px;background:#242424"></div>
<svg style="position:absolute;left:12px;top:731px;" width="20" height="21" viewBox="0 0 20 21" fill="none"><path d="M1.5 1.5 H15 L18.5 5 V20 H1.5 Z" fill="#efefef" stroke="#8a8a8a" stroke-width="1"/><path d="M3 3.5 H14.5 L17 6 V18.5 H3 Z" fill="#c9def2"/><path d="M6.5 9 a2.5 2.5 0 0 1 4.5 -1.5 a2 2 0 0 1 3 1.5 Z" fill="#fff"/><path d="M3 18.5 C6 14.5 12 13 17 14.5 V18.5 Z" fill="#45ad45"/><path d="M15 1.5 V5 H18.5" stroke="#8a8a8a" stroke-width="1" fill="#fff"/></svg>
<div style="position:absolute;left:36.299999999999955px;top:728.5px;line-height:25px;font-size:18px;color:#e5493a;white-space:nowrap;">a6953d5a-4c18-4b30-9319-4926ee77261f.png</div>
<div style="position:absolute;left:453px;top:728.5px;line-height:25px;font-size:18px;color:#e5493a;white-space:nowrap;">403</div>
<div style="position:absolute;left:586px;top:728.5px;line-height:25px;font-size:18px;color:#e5493a;white-space:nowrap;">xml</div>
<div style="position:absolute;left:719px;top:728.5px;line-height:25px;font-size:18px;color:#a8a8a8;white-space:nowrap;">Other</div>
<div style="position:absolute;right:442px;top:728.5px;line-height:25px;font-size:18px;color:#e5493a;white-space:nowrap;">334 B</div>
<div style="position:absolute;right:308px;top:728.5px;line-height:25px;font-size:18px;color:#e5493a;white-space:nowrap;">37 ms</div>
<div style="position:absolute;left:1475.5px;top:733px;width:3px;height:16px;background:#1aa7ec;border-radius:1px"></div>
<div style="position:absolute;left:0;top:757px;width:1500px;height:32px;background:#2a2a2a"></div>
<svg style="position:absolute;left:12px;top:763px;" width="20" height="21" viewBox="0 0 20 21" fill="none"><path d="M1.5 1.5 H15 L18.5 5 V20 H1.5 Z" fill="#efefef" stroke="#8a8a8a" stroke-width="1"/><path d="M3 3.5 H14.5 L17 6 V18.5 H3 Z" fill="#c9def2"/><path d="M6.5 9 a2.5 2.5 0 0 1 4.5 -1.5 a2 2 0 0 1 3 1.5 Z" fill="#fff"/><path d="M3 18.5 C6 14.5 12 13 17 14.5 V18.5 Z" fill="#45ad45"/><path d="M15 1.5 V5 H18.5" stroke="#8a8a8a" stroke-width="1" fill="#fff"/></svg>
<div style="position:absolute;left:36.299999999999955px;top:760.5px;line-height:25px;font-size:18px;color:#e5493a;white-space:nowrap;">5260ff39-986c-4a97-8850-2ec8c7583efc.png</div>
<div style="position:absolute;left:453px;top:760.5px;line-height:25px;font-size:18px;color:#e5493a;white-space:nowrap;">403</div>
<div style="position:absolute;left:586px;top:760.5px;line-height:25px;font-size:18px;color:#e5493a;white-space:nowrap;">xml</div>
<div style="position:absolute;left:719px;top:760.5px;line-height:25px;font-size:18px;color:#a8a8a8;white-space:nowrap;">Other</div>
<div style="position:absolute;right:442px;top:760.5px;line-height:25px;font-size:18px;color:#e5493a;white-space:nowrap;">334 B</div>
<div style="position:absolute;right:308px;top:760.5px;line-height:25px;font-size:18px;color:#e5493a;white-space:nowrap;">34 ms</div>
<div style="position:absolute;left:1475.5px;top:765px;width:3px;height:16px;background:#1aa7ec;border-radius:1px"></div>
<div style="position:absolute;left:0;top:789px;width:1500px;height:32px;background:#242424"></div>
<svg style="position:absolute;left:12px;top:795px;" width="20" height="21" viewBox="0 0 20 21" fill="none"><path d="M1.5 1.5 H15 L18.5 5 V20 H1.5 Z" fill="#efefef" stroke="#8a8a8a" stroke-width="1"/><path d="M3 3.5 H14.5 L17 6 V18.5 H3 Z" fill="#c9def2"/><path d="M6.5 9 a2.5 2.5 0 0 1 4.5 -1.5 a2 2 0 0 1 3 1.5 Z" fill="#fff"/><path d="M3 18.5 C6 14.5 12 13 17 14.5 V18.5 Z" fill="#45ad45"/><path d="M15 1.5 V5 H18.5" stroke="#8a8a8a" stroke-width="1" fill="#fff"/></svg>
<div style="position:absolute;left:36.299999999999955px;top:792.5px;line-height:25px;font-size:18px;color:#e5493a;white-space:nowrap;">4a9cefba-6a74-467e-9fde-6e687ea725d7.png</div>
<div style="position:absolute;left:453px;top:792.5px;line-height:25px;font-size:18px;color:#e5493a;white-space:nowrap;">403</div>
<div style="position:absolute;left:586px;top:792.5px;line-height:25px;font-size:18px;color:#e5493a;white-space:nowrap;">xml</div>
<div style="position:absolute;left:719px;top:792.5px;line-height:25px;font-size:18px;color:#a8a8a8;white-space:nowrap;">Other</div>
<div style="position:absolute;right:442px;top:792.5px;line-height:25px;font-size:18px;color:#e5493a;white-space:nowrap;">334 B</div>
<div style="position:absolute;right:308px;top:792.5px;line-height:25px;font-size:18px;color:#e5493a;white-space:nowrap;">34 ms</div>
<div style="position:absolute;left:1475.5px;top:797px;width:3px;height:16px;background:#1aa7ec;border-radius:1px"></div>
<div style="position:absolute;left:0;top:821px;width:1500px;height:32px;background:#2a2a2a"></div>
<div style="position:absolute;left:12px;top:827px;width:16px;height:20px;background:#fff;box-shadow:-1px 1px 0 #888"></div>
<div style="position:absolute;left:36.299999999999955px;top:824.5px;line-height:25px;font-size:18px;color:#e8e8e8;white-space:nowrap;">list?categoryId=12</div>
<div style="position:absolute;left:453px;top:824.5px;line-height:25px;font-size:18px;color:#e8e8e8;white-space:nowrap;">200</div>
<div style="position:absolute;left:586px;top:824.5px;line-height:25px;font-size:18px;color:#e8e8e8;white-space:nowrap;">xhr</div>
<div style="position:absolute;left:719px;top:824.5px;line-height:25px;font-size:18px;color:#e8e8e8;white-space:nowrap;text-decoration:underline">index.js:1</div>
<div style="position:absolute;right:442px;top:824.5px;line-height:25px;font-size:18px;color:#e8e8e8;white-space:nowrap;">724 B</div>
<div style="position:absolute;right:308px;top:824.5px;line-height:25px;font-size:18px;color:#e8e8e8;white-space:nowrap;">13 ms</div>
<div style="position:absolute;left:1475.5px;top:829px;width:3px;height:16px;background:#1aa7ec;border-radius:1px"></div>
<div style="position:absolute;left:0;top:853px;width:1500px;height:32px;background:#242424"></div>
<svg style="position:absolute;left:12px;top:859px;" width="20" height="21" viewBox="0 0 20 21" fill="none"><path d="M1.5 1.5 H15 L18.5 5 V20 H1.5 Z" fill="#efefef" stroke="#8a8a8a" stroke-width="1"/><path d="M3 3.5 H14.5 L17 6 V18.5 H3 Z" fill="#c9def2"/><path d="M6.5 9 a2.5 2.5 0 0 1 4.5 -1.5 a2 2 0 0 1 3 1.5 Z" fill="#fff"/><path d="M3 18.5 C6 14.5 12 13 17 14.5 V18.5 Z" fill="#45ad45"/><path d="M15 1.5 V5 H18.5" stroke="#8a8a8a" stroke-width="1" fill="#fff"/></svg>
<div style="position:absolute;left:36.299999999999955px;top:856.5px;line-height:25px;font-size:18px;color:#e5493a;white-space:nowrap;">475cc599-8661-4899-8f9e-121dd8ef7d02.png</div>
<div style="position:absolute;left:453px;top:856.5px;line-height:25px;font-size:18px;color:#e5493a;white-space:nowrap;">403</div>
<div style="position:absolute;left:586px;top:856.5px;line-height:25px;font-size:18px;color:#e5493a;white-space:nowrap;">xml</div>
<div style="position:absolute;left:719px;top:856.5px;line-height:25px;font-size:18px;color:#a8a8a8;white-space:nowrap;">Other</div>
<div style="position:absolute;right:442px;top:856.5px;line-height:25px;font-size:18px;color:#e5493a;white-space:nowrap;">334 B</div>
<div style="position:absolute;right:308px;top:856.5px;line-height:25px;font-size:18px;color:#e5493a;white-space:nowrap;">39 ms</div>
<div style="position:absolute;left:1475.5px;top:861px;width:3px;height:16px;background:#1aa7ec;border-radius:1px"></div>
<div style="position:absolute;left:0;top:885px;width:1500px;height:32px;background:#2a2a2a"></div>
<svg style="position:absolute;left:12px;top:891px;" width="20" height="21" viewBox="0 0 20 21" fill="none"><path d="M1.5 1.5 H15 L18.5 5 V20 H1.5 Z" fill="#efefef" stroke="#8a8a8a" stroke-width="1"/><path d="M3 3.5 H14.5 L17 6 V18.5 H3 Z" fill="#c9def2"/><path d="M6.5 9 a2.5 2.5 0 0 1 4.5 -1.5 a2 2 0 0 1 3 1.5 Z" fill="#fff"/><path d="M3 18.5 C6 14.5 12 13 17 14.5 V18.5 Z" fill="#45ad45"/><path d="M15 1.5 V5 H18.5" stroke="#8a8a8a" stroke-width="1" fill="#fff"/></svg>
<div style="position:absolute;left:36.299999999999955px;top:888.5px;line-height:25px;font-size:18px;color:#e5493a;white-space:nowrap;">76752350-2121-44d2-b477-10791c23a8ec.png</div>
<div style="position:absolute;left:453px;top:888.5px;line-height:25px;font-size:18px;color:#e5493a;white-space:nowrap;">403</div>
<div style="position:absolute;left:586px;top:888.5px;line-height:25px;font-size:18px;color:#e5493a;white-space:nowrap;">xml</div>
<div style="position:absolute;left:719px;top:888.5px;line-height:25px;font-size:18px;color:#a8a8a8;white-space:nowrap;">Other</div>
<div style="position:absolute;right:442px;top:888.5px;line-height:25px;font-size:18px;color:#e5493a;white-space:nowrap;">334 B</div>
<div style="position:absolute;right:308px;top:888.5px;line-height:25px;font-size:18px;color:#e5493a;white-space:nowrap;">38 ms</div>
<div style="position:absolute;left:1475.5px;top:893px;width:3px;height:16px;background:#1aa7ec;border-radius:1px"></div>
<div style="position:absolute;left:0;top:917px;width:1500px;height:32px;background:#242424"></div>
<div style="position:absolute;left:12px;top:923px;width:16px;height:20px;background:#fff;box-shadow:-1px 1px 0 #888"></div>
<div style="position:absolute;left:36.299999999999955px;top:920.5px;line-height:25px;font-size:18px;color:#e8e8e8;white-space:nowrap;">list?categoryId=21</div>
<div style="position:absolute;left:453px;top:920.5px;line-height:25px;font-size:18px;color:#e8e8e8;white-space:nowrap;">200</div>
<div style="position:absolute;left:586px;top:920.5px;line-height:25px;font-size:18px;color:#e8e8e8;white-space:nowrap;">xhr</div>
<div style="position:absolute;left:719px;top:920.5px;line-height:25px;font-size:18px;color:#e8e8e8;white-space:nowrap;text-decoration:underline">index.js:1</div>
<div style="position:absolute;right:442px;top:920.5px;line-height:25px;font-size:18px;color:#e8e8e8;white-space:nowrap;">475 B</div>
<div style="position:absolute;right:308px;top:920.5px;line-height:25px;font-size:18px;color:#e8e8e8;white-space:nowrap;">12 ms</div>
<div style="position:absolute;left:1475.5px;top:925px;width:3px;height:16px;background:#1aa7ec;border-radius:1px"></div>
<div style="position:absolute;left:0;top:949px;width:1500px;height:32px;background:#2a2a2a"></div>
<svg style="position:absolute;left:12px;top:955px;" width="20" height="21" viewBox="0 0 20 21" fill="none"><path d="M1.5 1.5 H15 L18.5 5 V20 H1.5 Z" fill="#efefef" stroke="#8a8a8a" stroke-width="1"/><path d="M3 3.5 H14.5 L17 6 V18.5 H3 Z" fill="#c9def2"/><path d="M6.5 9 a2.5 2.5 0 0 1 4.5 -1.5 a2 2 0 0 1 3 1.5 Z" fill="#fff"/><path d="M3 18.5 C6 14.5 12 13 17 14.5 V18.5 Z" fill="#45ad45"/><path d="M15 1.5 V5 H18.5" stroke="#8a8a8a" stroke-width="1" fill="#fff"/></svg>
<div style="position:absolute;left:36.299999999999955px;top:952.5px;line-height:25px;font-size:18px;color:#e5493a;white-space:nowrap;">c09a0ee8-9d19-428d-81b9-746221824113.png</div>
<div style="position:absolute;left:453px;top:952.5px;line-height:25px;font-size:18px;color:#e5493a;white-space:nowrap;">403</div>
<div style="position:absolute;left:586px;top:952.5px;line-height:25px;font-size:18px;color:#e5493a;white-space:nowrap;">xml</div>
<div style="position:absolute;left:719px;top:952.5px;line-height:25px;font-size:18px;color:#a8a8a8;white-space:nowrap;">Other</div>
<div style="position:absolute;right:442px;top:952.5px;line-height:25px;font-size:18px;color:#e5493a;white-space:nowrap;">334 B</div>
<div style="position:absolute;right:308px;top:952.5px;line-height:25px;font-size:18px;color:#e5493a;white-space:nowrap;">34 ms</div>
<div style="position:absolute;left:1475.5px;top:957px;width:3px;height:16px;background:#1aa7ec;border-radius:1px"></div>
<div style="position:absolute;left:446.5px;top:0;width:1px;height:980px;background:#3a3a3a"></div>
<div style="position:absolute;left:579.5px;top:0;width:1px;height:980px;background:#3a3a3a"></div>
<div style="position:absolute;left:712.5px;top:0;width:1px;height:980px;background:#3a3a3a"></div>
<div style="position:absolute;left:933.5px;top:0;width:1px;height:980px;background:#3a3a3a"></div>
<div style="position:absolute;left:1065.3000000000002px;top:0;width:1px;height:980px;background:#3a3a3a"></div>
<div style="position:absolute;left:1199.4px;top:0;width:1px;height:980px;background:#3a3a3a"></div>
<div style="position:absolute;left:1205.5px;top:0;width:2px;height:980px;background:#a8333f"></div>
<div style="position:absolute;left:1374px;top:0;width:1px;height:980px;background:#3a3a3a"></div>
</div>
<div style="position:absolute;left:2538px;top:465px;width:22px;height:980px;background:#262626;"></div>
<div style="position:absolute;left:2539px;top:900px;width:20px;height:545px;background:#353535;border-radius:3px;border:1px solid #444"></div>
<div style="position:absolute;left:1060px;top:1445px;width:1500px;height:41px;background:#292a2e;"></div>
<div style="position:absolute;left:1060px;top:1444.5px;width:1500px;height:1px;background:#3d3e42;"></div>
<div style="position:absolute;left:1077px;top:1454.7px;line-height:24px;font-size:17.4px;color:#e3e3e3;white-space:nowrap;">55 requests</div>
<div style="position:absolute;left:1182.3px;top:1455px;width:1px;height:24px;background:#4a4a4a;"></div>
<div style="position:absolute;left:1197.6px;top:1454.7px;line-height:24px;font-size:17.4px;color:#e3e3e3;white-space:nowrap;">19.6 kB transferred</div>
<div style="position:absolute;left:1359.7px;top:1455px;width:1px;height:24px;background:#4a4a4a;"></div>
<div style="position:absolute;left:1375.5px;top:1454.7px;line-height:24px;font-size:17.1px;color:#e3e3e3;white-space:nowrap;">161 kB resources</div>
<div style="position:absolute;left:0px;top:1486px;width:2560px;height:42px;background:#383838;"></div>
<div style="position:absolute;left:608px;top:1486px;width:2px;height:42px;background:#2c2c2c;"></div>
<div style="position:absolute;left:12px;top:1495.5px;line-height:25px;font-size:18px;color:#a8a8a8;white-space:nowrap;">页面路径</div>
<svg style="position:absolute;left:88px;top:1502px;" width="14" height="12" viewBox="0 0 14 12" fill="none"><path d="M3 4 L11 4 L7 9 Z" fill="#a8a8a8"/></svg>
<div style="position:absolute;left:113px;top:1499px;width:1px;height:19px;background:#6a6a6a;"></div>
<div style="position:absolute;left:125px;top:1495.5px;line-height:25px;font-size:18px;color:#a8a8a8;white-space:nowrap;">pages/index/index</div>
<svg style="position:absolute;left:281px;top:1497px;" width="22" height="22" viewBox="0 0 22 22" fill="none"><rect x="5" y="6" width="13" height="13" stroke="#a8a8a8" stroke-width="1.5"/><path d="M2.5 15 V3 H14" stroke="#a8a8a8" stroke-width="1.5"/></svg>
<svg style="position:absolute;left:470px;top:1494px;" width="32" height="30" viewBox="0 0 32 30" fill="none"><g stroke="#a8a8a8" stroke-width="1.5" fill="none"><ellipse cx="16" cy="15.5" rx="6.8" ry="8.3"/><path d="M12.3 7.7 Q16 2.7 19.7 7.7"/><path d="M16 7.2 V23.8"/><path d="M9.4 10.9 L4.7 8.1 M9.1 15.9 H3.1 M9.4 20.5 L4.7 23.3 M22.6 10.9 L27.3 8.1 M22.9 15.9 H28.9 M22.6 20.5 L27.3 23.3"/></g></svg>
<svg style="position:absolute;left:522px;top:1497px;" width="28" height="22" viewBox="0 0 28 22" fill="none"><path d="M2 11 Q14 0 26 11 Q14 22 2 11 Z" stroke="#a8a8a8" stroke-width="1.6"/><circle cx="14" cy="11" r="4" stroke="#a8a8a8" stroke-width="1.6"/></svg>
<svg style="position:absolute;left:572px;top:1502px;" width="24" height="12" viewBox="0 0 24 12" fill="none"><circle cx="3" cy="6" r="1.6" fill="#a8a8a8"/><circle cx="11.5" cy="6" r="1.6" fill="#a8a8a8"/><circle cx="20" cy="6" r="1.6" fill="#a8a8a8"/></svg>
<svg style="position:absolute;left:632px;top:1495px;" width="22" height="24" viewBox="0 0 22 24" fill="none"><circle cx="11" cy="12" r="9" stroke="#a8a8a8" stroke-width="1.5"/><path d="M7 8 L15 16 M15 8 L7 16" stroke="#a8a8a8" stroke-width="1.5"/></svg>
<div style="position:absolute;left:657px;top:1495.5px;line-height:25px;font-size:18px;color:#a8a8a8;white-space:nowrap;">0</div>
<svg style="position:absolute;left:672px;top:1496px;" width="24" height="22" viewBox="0 0 24 22" fill="none"><path d="M12 2 L22 20 H2 Z" stroke="#a8a8a8" stroke-width="1.5"/><path d="M12 8 V14 M12 16 V18" stroke="#a8a8a8" stroke-width="1.8"/></svg>
<div style="position:absolute;left:698px;top:1495.5px;line-height:25px;font-size:18px;color:#a8a8a8;white-space:nowrap;">0</div>
<div style="position:absolute;left:2097px;top:1495.0px;line-height:24px;font-size:17px;color:#a0a0a0;white-space:nowrap;letter-spacing:0.3px">行 20510，列 49</div>
<div style="position:absolute;left:2256px;top:1495.0px;line-height:24px;font-size:17px;color:#a0a0a0;white-space:nowrap;letter-spacing:0px">空格: 2</div>
<div style="position:absolute;left:2335px;top:1495.5px;line-height:23px;font-size:16.5px;color:#a0a0a0;white-space:nowrap;letter-spacing:-0.3px">UTF-8</div>
<div style="position:absolute;left:2406px;top:1495.0px;line-height:24px;font-size:16.8px;color:#a0a0a0;white-space:nowrap;letter-spacing:-1.5px">CRLF</div>
<div style="position:absolute;left:2468.5px;top:1495.0px;line-height:24px;font-size:16.8px;color:#a0a0a0;white-space:nowrap;letter-spacing:0px">JavaScript</div></body></html>
